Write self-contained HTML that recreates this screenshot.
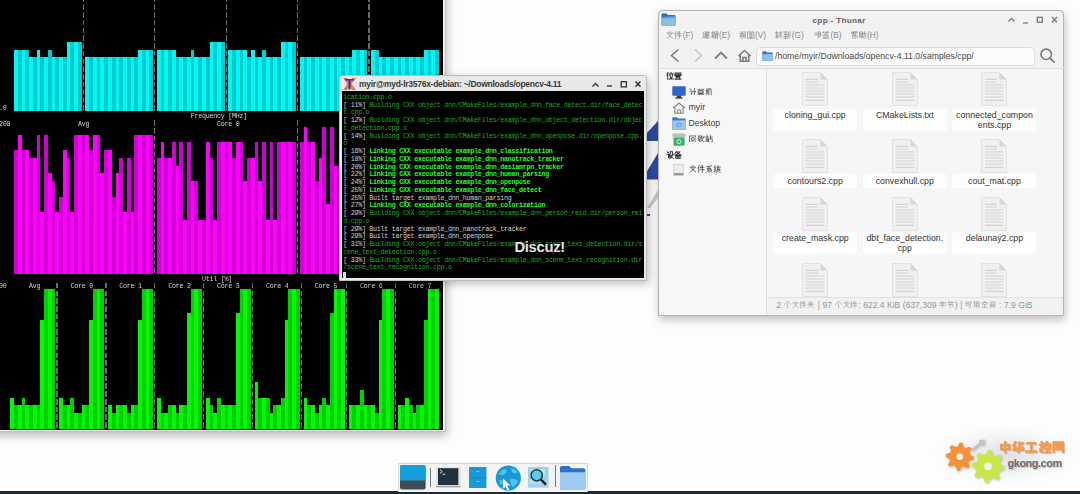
<!DOCTYPE html>
<html><head><meta charset="utf-8">
<style>
*{margin:0;padding:0;box-sizing:border-box}
html,body{width:1080px;height:494px;overflow:hidden;background:#fdfdfd;font-family:"Liberation Sans",sans-serif;position:relative}
.abs{position:absolute}
#stuiwin{position:absolute;left:-20px;top:-20px;width:465.8px;height:452.2px;background:#f0f0f0;box-shadow:1px 4px 9px rgba(0,0,0,0.26);border-right:1px solid #c0c0c0;border-bottom:1px solid #c0c0c0}
#stui{position:absolute;left:0;top:0;width:443px;height:430px;background:#000;overflow:hidden}
#stui i{position:absolute;display:block}
#stui b{position:absolute;display:block;width:1.3px;background:#6c6c6c}
#stui s{position:absolute;text-decoration:none;font-family:"Liberation Mono",monospace;font-size:6.6667px;letter-spacing:-0.24px;line-height:10px;color:#d6d6d6;transform:scaleY(1.1);transform-origin:0 50%;white-space:pre}
#wall1{position:absolute;left:646px;top:120px;width:14px;height:62px;background:#2a4fa8;clip-path:polygon(100% 0,100% 100%,0 100%,0 95%)}
#wall2{position:absolute;left:646px;top:186px;width:14px;height:34px;background:#c9ced8;clip-path:polygon(100% 0,100% 30%,20% 100%,0 100%)}
/* terminal */
#term{position:absolute;left:339px;top:74.5px;width:307.7px;height:206.5px;background:#e8e8e8;border:1px solid #bdbdbd;border-radius:3px 3px 0 0;box-shadow:2px 3px 8px rgba(0,0,0,0.25)}
#termtitle{position:absolute;left:19px;top:3.5px;font-weight:bold;font-size:8.5px;color:#383838;white-space:nowrap;letter-spacing:-0.265px}
#termbody{position:absolute;left:1.6px;top:15.8px;width:302.4px;height:187.1px;background:#000;overflow:hidden}
#termbody p{position:absolute;left:1.6px;font-family:"Liberation Mono",monospace;font-size:6.6667px;letter-spacing:-0.255px;line-height:8px;white-space:pre}
.w{color:#d0d0d0}.g{color:#1faa1f}.k{color:#22ff22;font-weight:bold}
#cursor{position:absolute;left:1.8px;top:180.8px;width:3px;height:6.2px;background:#e0e0e0}
#discuz{position:absolute;left:172.8px;top:147.4px;font-size:14.8px;font-weight:bold;color:#e4e4e4;text-shadow:0 0 2px #000,1px 1px 1px #000;letter-spacing:-0.3px}
/* thunar */
#thunar{position:absolute;left:658.5px;top:10px;width:406px;height:305.5px;background:#f6f6f5;border:1px solid #bcbcbc;border-radius:4px 4px 0 0;box-shadow:1px 3px 7px rgba(0,0,0,0.2);overflow:hidden}
.tt{position:absolute;white-space:nowrap}
</style></head><body>
<svg class="abs" style="left:640px;top:110px" width="20" height="120" viewBox="0 0 20 120"><polygon points="6,24 18,11 18,31 6,31" fill="#2a4ea6"/><polygon points="6,63 18,43 18,69.5 6,69.5" fill="#2a4ea6"/><polygon points="7,98 18,80 18,88 10,98" fill="#c8ccd4"/><rect x="7" y="104" width="3" height="2" fill="#33488a"/></svg>
<div id="stuiwin"></div>
<div id="stui"><i style="left:14px;top:49.59px;width:3.78px;height:61.9px;background:#00f8f4"></i><i style="left:17.76px;top:49.59px;width:3.78px;height:61.9px;background:#00ccd4"></i><i style="left:21.52px;top:49.59px;width:3.78px;height:61.9px;background:#00f8f4"></i><i style="left:25.28px;top:49.59px;width:3.78px;height:61.9px;background:#00ccd4"></i><i style="left:29.04px;top:57.32px;width:3.78px;height:54.16px;background:#00f8f4"></i><i style="left:32.8px;top:57.32px;width:3.78px;height:54.16px;background:#00ccd4"></i><i style="left:36.56px;top:49.59px;width:3.78px;height:61.9px;background:#00f8f4"></i><i style="left:40.32px;top:57.32px;width:3.78px;height:54.16px;background:#00ccd4"></i><i style="left:44.08px;top:57.32px;width:3.78px;height:54.16px;background:#00f8f4"></i><i style="left:47.84px;top:49.59px;width:3.78px;height:61.9px;background:#00ccd4"></i><i style="left:51.6px;top:57.32px;width:3.78px;height:54.16px;background:#00f8f4"></i><i style="left:55.36px;top:57.32px;width:3.78px;height:54.16px;background:#00ccd4"></i><i style="left:59.12px;top:57.32px;width:3.78px;height:54.16px;background:#00f8f4"></i><i style="left:62.88px;top:57.32px;width:3.78px;height:54.16px;background:#00ccd4"></i><i style="left:66.64px;top:41.85px;width:3.78px;height:69.63px;background:#00f8f4"></i><i style="left:70.4px;top:41.85px;width:3.78px;height:69.63px;background:#00ccd4"></i><i style="left:74.16px;top:41.85px;width:3.78px;height:69.63px;background:#00f8f4"></i><i style="left:77.92px;top:41.85px;width:3.78px;height:69.63px;background:#00ccd4"></i><b style="left:82.66px;top:-10px;height:4.49px"></b><b style="left:82.66px;top:-3.37px;height:5.6px"></b><b style="left:82.66px;top:4.36px;height:5.6px"></b><b style="left:82.66px;top:12.1px;height:5.6px"></b><b style="left:82.66px;top:19.84px;height:5.6px"></b><b style="left:82.66px;top:27.58px;height:5.6px"></b><b style="left:82.66px;top:35.31px;height:5.6px"></b><b style="left:82.66px;top:43.05px;height:5.6px"></b><b style="left:82.66px;top:50.79px;height:5.6px"></b><b style="left:82.66px;top:58.52px;height:5.6px"></b><b style="left:82.66px;top:66.26px;height:5.6px"></b><b style="left:82.66px;top:74px;height:5.6px"></b><b style="left:82.66px;top:81.73px;height:5.6px"></b><b style="left:82.66px;top:89.47px;height:5.6px"></b><b style="left:82.66px;top:97.21px;height:5.6px"></b><b style="left:82.66px;top:104.95px;height:5.6px"></b><i style="left:85.44px;top:57.32px;width:3.78px;height:54.16px;background:#00f8f4"></i><i style="left:89.2px;top:57.32px;width:3.78px;height:54.16px;background:#00ccd4"></i><i style="left:92.96px;top:57.32px;width:3.78px;height:54.16px;background:#00f8f4"></i><i style="left:96.72px;top:57.32px;width:3.78px;height:54.16px;background:#00ccd4"></i><i style="left:100.48px;top:57.32px;width:3.78px;height:54.16px;background:#00f8f4"></i><i style="left:104.24px;top:57.32px;width:3.78px;height:54.16px;background:#00ccd4"></i><i style="left:108px;top:57.32px;width:3.78px;height:54.16px;background:#00f8f4"></i><i style="left:111.76px;top:57.32px;width:3.78px;height:54.16px;background:#00ccd4"></i><i style="left:115.52px;top:57.32px;width:3.78px;height:54.16px;background:#00f8f4"></i><i style="left:119.28px;top:57.32px;width:3.78px;height:54.16px;background:#00ccd4"></i><i style="left:123.04px;top:57.32px;width:3.78px;height:54.16px;background:#00f8f4"></i><i style="left:126.8px;top:57.32px;width:3.78px;height:54.16px;background:#00ccd4"></i><i style="left:130.56px;top:57.32px;width:3.78px;height:54.16px;background:#00f8f4"></i><i style="left:134.32px;top:57.32px;width:3.78px;height:54.16px;background:#00ccd4"></i><i style="left:138.08px;top:49.59px;width:3.78px;height:61.9px;background:#00f8f4"></i><i style="left:141.84px;top:49.59px;width:3.78px;height:61.9px;background:#00ccd4"></i><i style="left:145.6px;top:49.59px;width:3.78px;height:61.9px;background:#00f8f4"></i><i style="left:149.36px;top:49.59px;width:3.78px;height:61.9px;background:#00ccd4"></i><b style="left:154.1px;top:-10px;height:4.49px"></b><b style="left:154.1px;top:-3.37px;height:5.6px"></b><b style="left:154.1px;top:4.36px;height:5.6px"></b><b style="left:154.1px;top:12.1px;height:5.6px"></b><b style="left:154.1px;top:19.84px;height:5.6px"></b><b style="left:154.1px;top:27.58px;height:5.6px"></b><b style="left:154.1px;top:35.31px;height:5.6px"></b><b style="left:154.1px;top:43.05px;height:5.6px"></b><b style="left:154.1px;top:50.79px;height:5.6px"></b><b style="left:154.1px;top:58.52px;height:5.6px"></b><b style="left:154.1px;top:66.26px;height:5.6px"></b><b style="left:154.1px;top:74px;height:5.6px"></b><b style="left:154.1px;top:81.73px;height:5.6px"></b><b style="left:154.1px;top:89.47px;height:5.6px"></b><b style="left:154.1px;top:97.21px;height:5.6px"></b><b style="left:154.1px;top:104.95px;height:5.6px"></b><i style="left:156.88px;top:49.59px;width:3.78px;height:61.9px;background:#00f8f4"></i><i style="left:160.64px;top:49.59px;width:3.78px;height:61.9px;background:#00ccd4"></i><i style="left:164.4px;top:49.59px;width:3.78px;height:61.9px;background:#00f8f4"></i><i style="left:168.16px;top:49.59px;width:3.78px;height:61.9px;background:#00ccd4"></i><i style="left:171.92px;top:49.59px;width:3.78px;height:61.9px;background:#00f8f4"></i><i style="left:175.68px;top:57.32px;width:3.78px;height:54.16px;background:#00ccd4"></i><i style="left:179.44px;top:57.32px;width:3.78px;height:54.16px;background:#00f8f4"></i><i style="left:183.2px;top:57.32px;width:3.78px;height:54.16px;background:#00ccd4"></i><i style="left:186.96px;top:57.32px;width:3.78px;height:54.16px;background:#00f8f4"></i><i style="left:190.72px;top:49.59px;width:3.78px;height:61.9px;background:#00ccd4"></i><i style="left:194.48px;top:57.32px;width:3.78px;height:54.16px;background:#00f8f4"></i><i style="left:198.24px;top:57.32px;width:3.78px;height:54.16px;background:#00ccd4"></i><i style="left:202px;top:57.32px;width:3.78px;height:54.16px;background:#00f8f4"></i><i style="left:205.76px;top:57.32px;width:3.78px;height:54.16px;background:#00ccd4"></i><i style="left:209.52px;top:41.85px;width:3.78px;height:69.63px;background:#00f8f4"></i><i style="left:213.28px;top:41.85px;width:3.78px;height:69.63px;background:#00ccd4"></i><i style="left:217.04px;top:41.85px;width:3.78px;height:69.63px;background:#00f8f4"></i><i style="left:220.8px;top:41.85px;width:3.78px;height:69.63px;background:#00ccd4"></i><b style="left:225.54px;top:-10px;height:4.49px"></b><b style="left:225.54px;top:-3.37px;height:5.6px"></b><b style="left:225.54px;top:4.36px;height:5.6px"></b><b style="left:225.54px;top:12.1px;height:5.6px"></b><b style="left:225.54px;top:19.84px;height:5.6px"></b><b style="left:225.54px;top:27.58px;height:5.6px"></b><b style="left:225.54px;top:35.31px;height:5.6px"></b><b style="left:225.54px;top:43.05px;height:5.6px"></b><b style="left:225.54px;top:50.79px;height:5.6px"></b><b style="left:225.54px;top:58.52px;height:5.6px"></b><b style="left:225.54px;top:66.26px;height:5.6px"></b><b style="left:225.54px;top:74px;height:5.6px"></b><b style="left:225.54px;top:81.73px;height:5.6px"></b><b style="left:225.54px;top:89.47px;height:5.6px"></b><b style="left:225.54px;top:97.21px;height:5.6px"></b><b style="left:225.54px;top:104.95px;height:5.6px"></b><i style="left:228.32px;top:49.59px;width:3.78px;height:61.9px;background:#00f8f4"></i><i style="left:232.08px;top:49.59px;width:3.78px;height:61.9px;background:#00ccd4"></i><i style="left:235.84px;top:49.59px;width:3.78px;height:61.9px;background:#00f8f4"></i><i style="left:239.6px;top:49.59px;width:3.78px;height:61.9px;background:#00ccd4"></i><i style="left:243.36px;top:49.59px;width:3.78px;height:61.9px;background:#00f8f4"></i><i style="left:247.12px;top:57.32px;width:3.78px;height:54.16px;background:#00ccd4"></i><i style="left:250.88px;top:49.59px;width:3.78px;height:61.9px;background:#00f8f4"></i><i style="left:254.64px;top:57.32px;width:3.78px;height:54.16px;background:#00ccd4"></i><i style="left:258.4px;top:57.32px;width:3.78px;height:54.16px;background:#00f8f4"></i><i style="left:262.16px;top:49.59px;width:3.78px;height:61.9px;background:#00ccd4"></i><i style="left:265.92px;top:57.32px;width:3.78px;height:54.16px;background:#00f8f4"></i><i style="left:269.68px;top:57.32px;width:3.78px;height:54.16px;background:#00ccd4"></i><i style="left:273.44px;top:57.32px;width:3.78px;height:54.16px;background:#00f8f4"></i><i style="left:277.2px;top:57.32px;width:3.78px;height:54.16px;background:#00ccd4"></i><i style="left:280.96px;top:41.85px;width:3.78px;height:69.63px;background:#00f8f4"></i><i style="left:284.72px;top:41.85px;width:3.78px;height:69.63px;background:#00ccd4"></i><i style="left:288.48px;top:41.85px;width:3.78px;height:69.63px;background:#00f8f4"></i><i style="left:292.24px;top:41.85px;width:3.78px;height:69.63px;background:#00ccd4"></i><b style="left:296.98px;top:-10px;height:4.49px"></b><b style="left:296.98px;top:-3.37px;height:5.6px"></b><b style="left:296.98px;top:4.36px;height:5.6px"></b><b style="left:296.98px;top:12.1px;height:5.6px"></b><b style="left:296.98px;top:19.84px;height:5.6px"></b><b style="left:296.98px;top:27.58px;height:5.6px"></b><b style="left:296.98px;top:35.31px;height:5.6px"></b><b style="left:296.98px;top:43.05px;height:5.6px"></b><b style="left:296.98px;top:50.79px;height:5.6px"></b><b style="left:296.98px;top:58.52px;height:5.6px"></b><b style="left:296.98px;top:66.26px;height:5.6px"></b><b style="left:296.98px;top:74px;height:5.6px"></b><b style="left:296.98px;top:81.73px;height:5.6px"></b><b style="left:296.98px;top:89.47px;height:5.6px"></b><b style="left:296.98px;top:97.21px;height:5.6px"></b><b style="left:296.98px;top:104.95px;height:5.6px"></b><i style="left:299.76px;top:57.32px;width:3.78px;height:54.16px;background:#00f8f4"></i><i style="left:303.52px;top:57.32px;width:3.78px;height:54.16px;background:#00ccd4"></i><i style="left:307.28px;top:57.32px;width:3.78px;height:54.16px;background:#00f8f4"></i><i style="left:311.04px;top:57.32px;width:3.78px;height:54.16px;background:#00ccd4"></i><i style="left:314.8px;top:57.32px;width:3.78px;height:54.16px;background:#00f8f4"></i><i style="left:318.56px;top:57.32px;width:3.78px;height:54.16px;background:#00ccd4"></i><i style="left:322.32px;top:57.32px;width:3.78px;height:54.16px;background:#00f8f4"></i><i style="left:326.08px;top:57.32px;width:3.78px;height:54.16px;background:#00ccd4"></i><i style="left:329.84px;top:57.32px;width:3.78px;height:54.16px;background:#00f8f4"></i><i style="left:333.6px;top:57.32px;width:3.78px;height:54.16px;background:#00ccd4"></i><i style="left:337.36px;top:57.32px;width:3.78px;height:54.16px;background:#00f8f4"></i><i style="left:341.12px;top:57.32px;width:3.78px;height:54.16px;background:#00ccd4"></i><i style="left:344.88px;top:57.32px;width:3.78px;height:54.16px;background:#00f8f4"></i><i style="left:348.64px;top:57.32px;width:3.78px;height:54.16px;background:#00ccd4"></i><i style="left:352.4px;top:49.59px;width:3.78px;height:61.9px;background:#00f8f4"></i><i style="left:356.16px;top:49.59px;width:3.78px;height:61.9px;background:#00ccd4"></i><i style="left:359.92px;top:49.59px;width:3.78px;height:61.9px;background:#00f8f4"></i><i style="left:363.68px;top:49.59px;width:3.78px;height:61.9px;background:#00ccd4"></i><b style="left:368.42px;top:-10px;height:4.49px"></b><b style="left:368.42px;top:-3.37px;height:5.6px"></b><b style="left:368.42px;top:4.36px;height:5.6px"></b><b style="left:368.42px;top:12.1px;height:5.6px"></b><b style="left:368.42px;top:19.84px;height:5.6px"></b><b style="left:368.42px;top:27.58px;height:5.6px"></b><b style="left:368.42px;top:35.31px;height:5.6px"></b><b style="left:368.42px;top:43.05px;height:5.6px"></b><b style="left:368.42px;top:50.79px;height:5.6px"></b><b style="left:368.42px;top:58.52px;height:5.6px"></b><b style="left:368.42px;top:66.26px;height:5.6px"></b><b style="left:368.42px;top:74px;height:5.6px"></b><b style="left:368.42px;top:81.73px;height:5.6px"></b><b style="left:368.42px;top:89.47px;height:5.6px"></b><b style="left:368.42px;top:97.21px;height:5.6px"></b><b style="left:368.42px;top:104.95px;height:5.6px"></b><i style="left:371.2px;top:49.59px;width:3.78px;height:61.9px;background:#00f8f4"></i><i style="left:374.96px;top:49.59px;width:3.78px;height:61.9px;background:#00ccd4"></i><i style="left:378.72px;top:57.32px;width:3.78px;height:54.16px;background:#00f8f4"></i><i style="left:382.48px;top:57.32px;width:3.78px;height:54.16px;background:#00ccd4"></i><i style="left:386.24px;top:57.32px;width:3.78px;height:54.16px;background:#00f8f4"></i><i style="left:390px;top:57.32px;width:3.78px;height:54.16px;background:#00ccd4"></i><i style="left:393.76px;top:57.32px;width:3.78px;height:54.16px;background:#00f8f4"></i><i style="left:397.52px;top:57.32px;width:3.78px;height:54.16px;background:#00ccd4"></i><i style="left:401.28px;top:57.32px;width:3.78px;height:54.16px;background:#00f8f4"></i><i style="left:405.04px;top:57.32px;width:3.78px;height:54.16px;background:#00ccd4"></i><i style="left:408.8px;top:57.32px;width:3.78px;height:54.16px;background:#00f8f4"></i><i style="left:412.56px;top:57.32px;width:3.78px;height:54.16px;background:#00ccd4"></i><i style="left:416.32px;top:57.32px;width:3.78px;height:54.16px;background:#00f8f4"></i><i style="left:420.08px;top:57.32px;width:3.78px;height:54.16px;background:#00ccd4"></i><i style="left:423.84px;top:49.59px;width:3.78px;height:61.9px;background:#00f8f4"></i><i style="left:427.6px;top:49.59px;width:3.78px;height:61.9px;background:#00ccd4"></i><i style="left:431.36px;top:49.59px;width:3.78px;height:61.9px;background:#00f8f4"></i><i style="left:435.12px;top:49.59px;width:3.78px;height:61.9px;background:#00ccd4"></i><i style="left:14px;top:150.17px;width:3.78px;height:123.79px;background:#d000d4"></i><i style="left:17.76px;top:134.69px;width:3.78px;height:139.27px;background:#ff00ff"></i><i style="left:21.52px;top:150.17px;width:3.78px;height:123.79px;background:#d000d4"></i><i style="left:25.28px;top:150.17px;width:3.78px;height:123.79px;background:#ff00ff"></i><i style="left:29.04px;top:157.9px;width:3.78px;height:116.06px;background:#d000d4"></i><i style="left:32.8px;top:157.9px;width:3.78px;height:116.06px;background:#ff00ff"></i><i style="left:36.56px;top:134.69px;width:3.78px;height:139.27px;background:#d000d4"></i><i style="left:40.32px;top:212.06px;width:3.78px;height:61.9px;background:#ff00ff"></i><i style="left:44.08px;top:134.69px;width:3.78px;height:139.27px;background:#d000d4"></i><i style="left:47.84px;top:173.38px;width:3.78px;height:100.58px;background:#ff00ff"></i><i style="left:51.6px;top:181.12px;width:3.78px;height:92.84px;background:#d000d4"></i><i style="left:55.36px;top:212.06px;width:3.78px;height:61.9px;background:#ff00ff"></i><i style="left:59.12px;top:196.59px;width:3.78px;height:77.37px;background:#d000d4"></i><i style="left:62.88px;top:150.17px;width:3.78px;height:123.79px;background:#ff00ff"></i><i style="left:66.64px;top:157.9px;width:3.78px;height:116.06px;background:#d000d4"></i><i style="left:70.4px;top:212.06px;width:3.78px;height:61.9px;background:#ff00ff"></i><i style="left:74.16px;top:134.69px;width:3.78px;height:139.27px;background:#d000d4"></i><i style="left:77.92px;top:134.69px;width:3.78px;height:139.27px;background:#ff00ff"></i><i style="left:81.68px;top:134.69px;width:3.78px;height:139.27px;background:#d000d4"></i><i style="left:85.44px;top:134.69px;width:3.78px;height:139.27px;background:#ff00ff"></i><i style="left:89.2px;top:150.17px;width:3.78px;height:123.79px;background:#d000d4"></i><i style="left:92.96px;top:134.69px;width:3.78px;height:139.27px;background:#ff00ff"></i><i style="left:96.72px;top:134.69px;width:3.78px;height:139.27px;background:#d000d4"></i><i style="left:100.48px;top:173.38px;width:3.78px;height:100.58px;background:#ff00ff"></i><i style="left:104.24px;top:150.17px;width:3.78px;height:123.79px;background:#d000d4"></i><i style="left:108px;top:150.17px;width:3.78px;height:123.79px;background:#ff00ff"></i><i style="left:111.76px;top:196.59px;width:3.78px;height:77.37px;background:#d000d4"></i><i style="left:115.52px;top:173.38px;width:3.78px;height:100.58px;background:#ff00ff"></i><i style="left:119.28px;top:157.9px;width:3.78px;height:116.06px;background:#d000d4"></i><i style="left:123.04px;top:212.06px;width:3.78px;height:61.9px;background:#ff00ff"></i><i style="left:126.8px;top:157.9px;width:3.78px;height:116.06px;background:#d000d4"></i><i style="left:130.56px;top:212.06px;width:3.78px;height:61.9px;background:#ff00ff"></i><i style="left:134.32px;top:134.69px;width:3.78px;height:139.27px;background:#d000d4"></i><i style="left:138.08px;top:134.69px;width:3.78px;height:139.27px;background:#ff00ff"></i><i style="left:141.84px;top:134.69px;width:3.78px;height:139.27px;background:#d000d4"></i><i style="left:145.6px;top:134.69px;width:3.78px;height:139.27px;background:#ff00ff"></i><i style="left:149.36px;top:134.69px;width:3.78px;height:139.27px;background:#d000d4"></i><b style="left:154.1px;top:120.42px;height:5.6px"></b><b style="left:154.1px;top:128.16px;height:5.6px"></b><b style="left:154.1px;top:135.89px;height:5.6px"></b><b style="left:154.1px;top:143.63px;height:5.6px"></b><b style="left:154.1px;top:151.37px;height:5.6px"></b><b style="left:154.1px;top:159.1px;height:5.6px"></b><b style="left:154.1px;top:166.84px;height:5.6px"></b><b style="left:154.1px;top:174.58px;height:5.6px"></b><b style="left:154.1px;top:182.32px;height:5.6px"></b><b style="left:154.1px;top:190.05px;height:5.6px"></b><b style="left:154.1px;top:197.79px;height:5.6px"></b><b style="left:154.1px;top:205.53px;height:5.6px"></b><b style="left:154.1px;top:213.26px;height:5.6px"></b><b style="left:154.1px;top:221px;height:5.6px"></b><b style="left:154.1px;top:228.74px;height:5.6px"></b><b style="left:154.1px;top:236.47px;height:5.6px"></b><b style="left:154.1px;top:244.21px;height:5.6px"></b><b style="left:154.1px;top:251.95px;height:5.6px"></b><b style="left:154.1px;top:259.69px;height:5.6px"></b><b style="left:154.1px;top:267.42px;height:5.6px"></b><i style="left:156.88px;top:157.9px;width:3.78px;height:116.06px;background:#d000d4"></i><i style="left:160.64px;top:142.43px;width:3.78px;height:131.53px;background:#ff00ff"></i><i style="left:164.4px;top:157.9px;width:3.78px;height:116.06px;background:#d000d4"></i><i style="left:168.16px;top:157.9px;width:3.78px;height:116.06px;background:#ff00ff"></i><i style="left:171.92px;top:142.43px;width:3.78px;height:131.53px;background:#d000d4"></i><i style="left:175.68px;top:165.64px;width:3.78px;height:108.32px;background:#ff00ff"></i><i style="left:179.44px;top:142.43px;width:3.78px;height:131.53px;background:#d000d4"></i><i style="left:183.2px;top:219.8px;width:3.78px;height:54.16px;background:#ff00ff"></i><i style="left:186.96px;top:142.43px;width:3.78px;height:131.53px;background:#d000d4"></i><i style="left:190.72px;top:181.12px;width:3.78px;height:92.84px;background:#ff00ff"></i><i style="left:194.48px;top:181.12px;width:3.78px;height:92.84px;background:#d000d4"></i><i style="left:198.24px;top:219.8px;width:3.78px;height:54.16px;background:#ff00ff"></i><i style="left:202px;top:219.8px;width:3.78px;height:54.16px;background:#d000d4"></i><i style="left:205.76px;top:142.43px;width:3.78px;height:131.53px;background:#ff00ff"></i><i style="left:209.52px;top:157.9px;width:3.78px;height:116.06px;background:#d000d4"></i><i style="left:213.28px;top:219.8px;width:3.78px;height:54.16px;background:#ff00ff"></i><i style="left:217.04px;top:142.43px;width:3.78px;height:131.53px;background:#d000d4"></i><i style="left:220.8px;top:142.43px;width:3.78px;height:131.53px;background:#ff00ff"></i><i style="left:224.56px;top:142.43px;width:3.78px;height:131.53px;background:#d000d4"></i><i style="left:228.32px;top:142.43px;width:3.78px;height:131.53px;background:#ff00ff"></i><i style="left:232.08px;top:157.9px;width:3.78px;height:116.06px;background:#d000d4"></i><i style="left:235.84px;top:142.43px;width:3.78px;height:131.53px;background:#ff00ff"></i><i style="left:239.6px;top:142.43px;width:3.78px;height:131.53px;background:#d000d4"></i><i style="left:243.36px;top:181.12px;width:3.78px;height:92.84px;background:#ff00ff"></i><i style="left:247.12px;top:157.9px;width:3.78px;height:116.06px;background:#d000d4"></i><i style="left:250.88px;top:157.9px;width:3.78px;height:116.06px;background:#ff00ff"></i><i style="left:254.64px;top:142.43px;width:3.78px;height:131.53px;background:#d000d4"></i><i style="left:258.4px;top:181.12px;width:3.78px;height:92.84px;background:#ff00ff"></i><i style="left:262.16px;top:142.43px;width:3.78px;height:131.53px;background:#d000d4"></i><i style="left:265.92px;top:219.8px;width:3.78px;height:54.16px;background:#ff00ff"></i><i style="left:269.68px;top:142.43px;width:3.78px;height:131.53px;background:#d000d4"></i><i style="left:273.44px;top:219.8px;width:3.78px;height:54.16px;background:#ff00ff"></i><i style="left:277.2px;top:142.43px;width:3.78px;height:131.53px;background:#d000d4"></i><i style="left:280.96px;top:142.43px;width:3.78px;height:131.53px;background:#ff00ff"></i><i style="left:284.72px;top:142.43px;width:3.78px;height:131.53px;background:#d000d4"></i><i style="left:288.48px;top:142.43px;width:3.78px;height:131.53px;background:#ff00ff"></i><i style="left:292.24px;top:142.43px;width:3.78px;height:131.53px;background:#d000d4"></i><b style="left:296.98px;top:120.42px;height:5.6px"></b><b style="left:296.98px;top:128.16px;height:5.6px"></b><b style="left:296.98px;top:135.89px;height:5.6px"></b><b style="left:296.98px;top:143.63px;height:5.6px"></b><b style="left:296.98px;top:151.37px;height:5.6px"></b><b style="left:296.98px;top:159.1px;height:5.6px"></b><b style="left:296.98px;top:166.84px;height:5.6px"></b><b style="left:296.98px;top:174.58px;height:5.6px"></b><b style="left:296.98px;top:182.32px;height:5.6px"></b><b style="left:296.98px;top:190.05px;height:5.6px"></b><b style="left:296.98px;top:197.79px;height:5.6px"></b><b style="left:296.98px;top:205.53px;height:5.6px"></b><b style="left:296.98px;top:213.26px;height:5.6px"></b><b style="left:296.98px;top:221px;height:5.6px"></b><b style="left:296.98px;top:228.74px;height:5.6px"></b><b style="left:296.98px;top:236.47px;height:5.6px"></b><b style="left:296.98px;top:244.21px;height:5.6px"></b><b style="left:296.98px;top:251.95px;height:5.6px"></b><b style="left:296.98px;top:259.69px;height:5.6px"></b><b style="left:296.98px;top:267.42px;height:5.6px"></b><i style="left:299.76px;top:142.43px;width:3.78px;height:131.53px;background:#d000d4"></i><i style="left:303.52px;top:126.96px;width:3.78px;height:147px;background:#ff00ff"></i><i style="left:307.28px;top:142.43px;width:3.78px;height:131.53px;background:#d000d4"></i><i style="left:311.04px;top:142.43px;width:3.78px;height:131.53px;background:#ff00ff"></i><i style="left:314.8px;top:181.12px;width:3.78px;height:92.84px;background:#d000d4"></i><i style="left:318.56px;top:157.9px;width:3.78px;height:116.06px;background:#ff00ff"></i><i style="left:322.32px;top:126.96px;width:3.78px;height:147px;background:#d000d4"></i><i style="left:326.08px;top:204.33px;width:3.78px;height:69.63px;background:#ff00ff"></i><i style="left:329.84px;top:126.96px;width:3.78px;height:147px;background:#d000d4"></i><i style="left:333.6px;top:165.64px;width:3.78px;height:108.32px;background:#ff00ff"></i><i style="left:337.36px;top:165.64px;width:3.78px;height:108.32px;background:#d000d4"></i><i style="left:341.12px;top:142.43px;width:3.78px;height:131.53px;background:#ff00ff"></i><i style="left:344.88px;top:142.43px;width:3.78px;height:131.53px;background:#d000d4"></i><i style="left:348.64px;top:142.43px;width:3.78px;height:131.53px;background:#ff00ff"></i><i style="left:352.4px;top:142.43px;width:3.78px;height:131.53px;background:#d000d4"></i><i style="left:356.16px;top:142.43px;width:3.78px;height:131.53px;background:#ff00ff"></i><i style="left:359.92px;top:142.43px;width:3.78px;height:131.53px;background:#d000d4"></i><i style="left:363.68px;top:142.43px;width:3.78px;height:131.53px;background:#ff00ff"></i><i style="left:367.44px;top:142.43px;width:3.78px;height:131.53px;background:#d000d4"></i><i style="left:371.2px;top:142.43px;width:3.78px;height:131.53px;background:#ff00ff"></i><i style="left:374.96px;top:142.43px;width:3.78px;height:131.53px;background:#d000d4"></i><i style="left:378.72px;top:142.43px;width:3.78px;height:131.53px;background:#ff00ff"></i><i style="left:382.48px;top:142.43px;width:3.78px;height:131.53px;background:#d000d4"></i><i style="left:386.24px;top:142.43px;width:3.78px;height:131.53px;background:#ff00ff"></i><i style="left:390px;top:142.43px;width:3.78px;height:131.53px;background:#d000d4"></i><i style="left:393.76px;top:142.43px;width:3.78px;height:131.53px;background:#ff00ff"></i><i style="left:397.52px;top:142.43px;width:3.78px;height:131.53px;background:#d000d4"></i><i style="left:401.28px;top:142.43px;width:3.78px;height:131.53px;background:#ff00ff"></i><i style="left:405.04px;top:142.43px;width:3.78px;height:131.53px;background:#d000d4"></i><i style="left:408.8px;top:142.43px;width:3.78px;height:131.53px;background:#ff00ff"></i><i style="left:412.56px;top:142.43px;width:3.78px;height:131.53px;background:#d000d4"></i><i style="left:416.32px;top:142.43px;width:3.78px;height:131.53px;background:#ff00ff"></i><i style="left:420.08px;top:142.43px;width:3.78px;height:131.53px;background:#d000d4"></i><i style="left:423.84px;top:142.43px;width:3.78px;height:131.53px;background:#ff00ff"></i><i style="left:427.6px;top:142.43px;width:3.78px;height:131.53px;background:#d000d4"></i><i style="left:431.36px;top:142.43px;width:3.78px;height:131.53px;background:#ff00ff"></i><i style="left:435.12px;top:142.43px;width:3.78px;height:131.53px;background:#d000d4"></i><i style="left:10.24px;top:397.75px;width:3.78px;height:30.95px;background:#00f800"></i><i style="left:14px;top:405.49px;width:3.78px;height:23.21px;background:#00d000"></i><i style="left:17.76px;top:405.49px;width:3.78px;height:23.21px;background:#00f800"></i><i style="left:21.52px;top:397.75px;width:3.78px;height:30.95px;background:#00d000"></i><i style="left:25.28px;top:405.49px;width:3.78px;height:23.21px;background:#00f800"></i><i style="left:29.04px;top:405.49px;width:3.78px;height:23.21px;background:#00d000"></i><i style="left:32.8px;top:405.49px;width:3.78px;height:23.21px;background:#00f800"></i><i style="left:36.56px;top:405.49px;width:3.78px;height:23.21px;background:#00d000"></i><i style="left:40.32px;top:320.38px;width:3.78px;height:108.32px;background:#00f800"></i><i style="left:44.08px;top:289.43px;width:3.78px;height:139.27px;background:#00d000"></i><i style="left:47.84px;top:289.43px;width:3.78px;height:139.27px;background:#00f800"></i><i style="left:51.6px;top:289.43px;width:3.78px;height:139.27px;background:#00d000"></i><i style="left:59.12px;top:397.75px;width:3.78px;height:30.95px;background:#00f800"></i><i style="left:62.88px;top:405.49px;width:3.78px;height:23.21px;background:#00d000"></i><i style="left:66.64px;top:405.49px;width:3.78px;height:23.21px;background:#00f800"></i><i style="left:70.4px;top:397.75px;width:3.78px;height:30.95px;background:#00d000"></i><i style="left:74.16px;top:413.23px;width:3.78px;height:15.47px;background:#00f800"></i><i style="left:77.92px;top:413.23px;width:3.78px;height:15.47px;background:#00d000"></i><i style="left:81.68px;top:405.49px;width:3.78px;height:23.21px;background:#00f800"></i><i style="left:85.44px;top:405.49px;width:3.78px;height:23.21px;background:#00d000"></i><i style="left:89.2px;top:320.38px;width:3.78px;height:108.32px;background:#00f800"></i><i style="left:92.96px;top:289.43px;width:3.78px;height:139.27px;background:#00d000"></i><i style="left:96.72px;top:289.43px;width:3.78px;height:139.27px;background:#00f800"></i><i style="left:100.48px;top:289.43px;width:3.78px;height:139.27px;background:#00d000"></i><i style="left:108px;top:405.49px;width:3.78px;height:23.21px;background:#00f800"></i><i style="left:111.76px;top:413.23px;width:3.78px;height:15.47px;background:#00d000"></i><i style="left:115.52px;top:405.49px;width:3.78px;height:23.21px;background:#00f800"></i><i style="left:119.28px;top:405.49px;width:3.78px;height:23.21px;background:#00d000"></i><i style="left:123.04px;top:405.49px;width:3.78px;height:23.21px;background:#00f800"></i><i style="left:126.8px;top:413.23px;width:3.78px;height:15.47px;background:#00d000"></i><i style="left:130.56px;top:405.49px;width:3.78px;height:23.21px;background:#00f800"></i><i style="left:134.32px;top:405.49px;width:3.78px;height:23.21px;background:#00d000"></i><i style="left:138.08px;top:320.38px;width:3.78px;height:108.32px;background:#00f800"></i><i style="left:141.84px;top:289.43px;width:3.78px;height:139.27px;background:#00d000"></i><i style="left:145.6px;top:289.43px;width:3.78px;height:139.27px;background:#00f800"></i><i style="left:149.36px;top:289.43px;width:3.78px;height:139.27px;background:#00d000"></i><i style="left:156.88px;top:397.75px;width:3.78px;height:30.95px;background:#00f800"></i><i style="left:160.64px;top:413.23px;width:3.78px;height:15.47px;background:#00d000"></i><i style="left:164.4px;top:413.23px;width:3.78px;height:15.47px;background:#00f800"></i><i style="left:168.16px;top:405.49px;width:3.78px;height:23.21px;background:#00d000"></i><i style="left:171.92px;top:405.49px;width:3.78px;height:23.21px;background:#00f800"></i><i style="left:175.68px;top:413.23px;width:3.78px;height:15.47px;background:#00d000"></i><i style="left:179.44px;top:405.49px;width:3.78px;height:23.21px;background:#00f800"></i><i style="left:183.2px;top:405.49px;width:3.78px;height:23.21px;background:#00d000"></i><i style="left:186.96px;top:312.64px;width:3.78px;height:116.06px;background:#00f800"></i><i style="left:190.72px;top:289.43px;width:3.78px;height:139.27px;background:#00d000"></i><i style="left:194.48px;top:289.43px;width:3.78px;height:139.27px;background:#00f800"></i><i style="left:198.24px;top:289.43px;width:3.78px;height:139.27px;background:#00d000"></i><i style="left:205.76px;top:397.75px;width:3.78px;height:30.95px;background:#00f800"></i><i style="left:209.52px;top:405.49px;width:3.78px;height:23.21px;background:#00d000"></i><i style="left:213.28px;top:413.23px;width:3.78px;height:15.47px;background:#00f800"></i><i style="left:217.04px;top:397.75px;width:3.78px;height:30.95px;background:#00d000"></i><i style="left:220.8px;top:405.49px;width:3.78px;height:23.21px;background:#00f800"></i><i style="left:224.56px;top:405.49px;width:3.78px;height:23.21px;background:#00d000"></i><i style="left:228.32px;top:405.49px;width:3.78px;height:23.21px;background:#00f800"></i><i style="left:232.08px;top:405.49px;width:3.78px;height:23.21px;background:#00d000"></i><i style="left:235.84px;top:312.64px;width:3.78px;height:116.06px;background:#00f800"></i><i style="left:239.6px;top:289.43px;width:3.78px;height:139.27px;background:#00d000"></i><i style="left:243.36px;top:289.43px;width:3.78px;height:139.27px;background:#00f800"></i><i style="left:247.12px;top:289.43px;width:3.78px;height:139.27px;background:#00d000"></i><i style="left:254.64px;top:382.28px;width:3.78px;height:46.42px;background:#00f800"></i><i style="left:258.4px;top:397.75px;width:3.78px;height:30.95px;background:#00d000"></i><i style="left:262.16px;top:397.75px;width:3.78px;height:30.95px;background:#00f800"></i><i style="left:265.92px;top:397.75px;width:3.78px;height:30.95px;background:#00d000"></i><i style="left:269.68px;top:413.23px;width:3.78px;height:15.47px;background:#00f800"></i><i style="left:273.44px;top:405.49px;width:3.78px;height:23.21px;background:#00d000"></i><i style="left:277.2px;top:405.49px;width:3.78px;height:23.21px;background:#00f800"></i><i style="left:280.96px;top:397.75px;width:3.78px;height:30.95px;background:#00d000"></i><i style="left:284.72px;top:320.38px;width:3.78px;height:108.32px;background:#00f800"></i><i style="left:288.48px;top:289.43px;width:3.78px;height:139.27px;background:#00d000"></i><i style="left:292.24px;top:289.43px;width:3.78px;height:139.27px;background:#00f800"></i><i style="left:296px;top:289.43px;width:3.78px;height:139.27px;background:#00d000"></i><i style="left:303.52px;top:397.75px;width:3.78px;height:30.95px;background:#00f800"></i><i style="left:307.28px;top:405.49px;width:3.78px;height:23.21px;background:#00d000"></i><i style="left:311.04px;top:405.49px;width:3.78px;height:23.21px;background:#00f800"></i><i style="left:314.8px;top:413.23px;width:3.78px;height:15.47px;background:#00d000"></i><i style="left:318.56px;top:405.49px;width:3.78px;height:23.21px;background:#00f800"></i><i style="left:322.32px;top:397.75px;width:3.78px;height:30.95px;background:#00d000"></i><i style="left:326.08px;top:405.49px;width:3.78px;height:23.21px;background:#00f800"></i><i style="left:329.84px;top:312.64px;width:3.78px;height:116.06px;background:#00d000"></i><i style="left:333.6px;top:289.43px;width:3.78px;height:139.27px;background:#00f800"></i><i style="left:337.36px;top:289.43px;width:3.78px;height:139.27px;background:#00d000"></i><i style="left:341.12px;top:289.43px;width:3.78px;height:139.27px;background:#00f800"></i><i style="left:348.64px;top:405.49px;width:3.78px;height:23.21px;background:#00f800"></i><i style="left:352.4px;top:405.49px;width:3.78px;height:23.21px;background:#00d000"></i><i style="left:356.16px;top:405.49px;width:3.78px;height:23.21px;background:#00f800"></i><i style="left:359.92px;top:390.01px;width:3.78px;height:38.69px;background:#00d000"></i><i style="left:363.68px;top:405.49px;width:3.78px;height:23.21px;background:#00f800"></i><i style="left:367.44px;top:405.49px;width:3.78px;height:23.21px;background:#00d000"></i><i style="left:371.2px;top:405.49px;width:3.78px;height:23.21px;background:#00f800"></i><i style="left:374.96px;top:413.23px;width:3.78px;height:15.47px;background:#00d000"></i><i style="left:378.72px;top:320.38px;width:3.78px;height:108.32px;background:#00f800"></i><i style="left:382.48px;top:289.43px;width:3.78px;height:139.27px;background:#00d000"></i><i style="left:386.24px;top:289.43px;width:3.78px;height:139.27px;background:#00f800"></i><i style="left:390px;top:289.43px;width:3.78px;height:139.27px;background:#00d000"></i><i style="left:397.52px;top:405.49px;width:3.78px;height:23.21px;background:#00f800"></i><i style="left:401.28px;top:405.49px;width:3.78px;height:23.21px;background:#00d000"></i><i style="left:405.04px;top:397.75px;width:3.78px;height:30.95px;background:#00f800"></i><i style="left:408.8px;top:405.49px;width:3.78px;height:23.21px;background:#00d000"></i><i style="left:412.56px;top:413.23px;width:3.78px;height:15.47px;background:#00f800"></i><i style="left:416.32px;top:405.49px;width:3.78px;height:23.21px;background:#00d000"></i><i style="left:420.08px;top:405.49px;width:3.78px;height:23.21px;background:#00f800"></i><i style="left:423.84px;top:320.38px;width:3.78px;height:108.32px;background:#00d000"></i><i style="left:427.6px;top:289.43px;width:3.78px;height:139.27px;background:#00f800"></i><i style="left:431.36px;top:289.43px;width:3.78px;height:139.27px;background:#00d000"></i><i style="left:435.12px;top:289.43px;width:3.78px;height:139.27px;background:#00f800"></i><b style="left:56.34px;top:282.9px;height:5.6px"></b><b style="left:56.34px;top:290.63px;height:5.6px"></b><b style="left:56.34px;top:298.37px;height:5.6px"></b><b style="left:56.34px;top:306.11px;height:5.6px"></b><b style="left:56.34px;top:313.85px;height:5.6px"></b><b style="left:56.34px;top:321.58px;height:5.6px"></b><b style="left:56.34px;top:329.32px;height:5.6px"></b><b style="left:56.34px;top:337.06px;height:5.6px"></b><b style="left:56.34px;top:344.79px;height:5.6px"></b><b style="left:56.34px;top:352.53px;height:5.6px"></b><b style="left:56.34px;top:360.27px;height:5.6px"></b><b style="left:56.34px;top:368px;height:5.6px"></b><b style="left:56.34px;top:375.74px;height:5.6px"></b><b style="left:56.34px;top:383.48px;height:5.6px"></b><b style="left:56.34px;top:391.22px;height:5.6px"></b><b style="left:56.34px;top:398.95px;height:5.6px"></b><b style="left:56.34px;top:406.69px;height:5.6px"></b><b style="left:56.34px;top:414.43px;height:5.6px"></b><b style="left:56.34px;top:422.16px;height:5.6px"></b><b style="left:105.22px;top:282.9px;height:5.6px"></b><b style="left:105.22px;top:290.63px;height:5.6px"></b><b style="left:105.22px;top:298.37px;height:5.6px"></b><b style="left:105.22px;top:306.11px;height:5.6px"></b><b style="left:105.22px;top:313.85px;height:5.6px"></b><b style="left:105.22px;top:321.58px;height:5.6px"></b><b style="left:105.22px;top:329.32px;height:5.6px"></b><b style="left:105.22px;top:337.06px;height:5.6px"></b><b style="left:105.22px;top:344.79px;height:5.6px"></b><b style="left:105.22px;top:352.53px;height:5.6px"></b><b style="left:105.22px;top:360.27px;height:5.6px"></b><b style="left:105.22px;top:368px;height:5.6px"></b><b style="left:105.22px;top:375.74px;height:5.6px"></b><b style="left:105.22px;top:383.48px;height:5.6px"></b><b style="left:105.22px;top:391.22px;height:5.6px"></b><b style="left:105.22px;top:398.95px;height:5.6px"></b><b style="left:105.22px;top:406.69px;height:5.6px"></b><b style="left:105.22px;top:414.43px;height:5.6px"></b><b style="left:105.22px;top:422.16px;height:5.6px"></b><b style="left:154.1px;top:282.9px;height:5.6px"></b><b style="left:154.1px;top:290.63px;height:5.6px"></b><b style="left:154.1px;top:298.37px;height:5.6px"></b><b style="left:154.1px;top:306.11px;height:5.6px"></b><b style="left:154.1px;top:313.85px;height:5.6px"></b><b style="left:154.1px;top:321.58px;height:5.6px"></b><b style="left:154.1px;top:329.32px;height:5.6px"></b><b style="left:154.1px;top:337.06px;height:5.6px"></b><b style="left:154.1px;top:344.79px;height:5.6px"></b><b style="left:154.1px;top:352.53px;height:5.6px"></b><b style="left:154.1px;top:360.27px;height:5.6px"></b><b style="left:154.1px;top:368px;height:5.6px"></b><b style="left:154.1px;top:375.74px;height:5.6px"></b><b style="left:154.1px;top:383.48px;height:5.6px"></b><b style="left:154.1px;top:391.22px;height:5.6px"></b><b style="left:154.1px;top:398.95px;height:5.6px"></b><b style="left:154.1px;top:406.69px;height:5.6px"></b><b style="left:154.1px;top:414.43px;height:5.6px"></b><b style="left:154.1px;top:422.16px;height:5.6px"></b><b style="left:202.98px;top:282.9px;height:5.6px"></b><b style="left:202.98px;top:290.63px;height:5.6px"></b><b style="left:202.98px;top:298.37px;height:5.6px"></b><b style="left:202.98px;top:306.11px;height:5.6px"></b><b style="left:202.98px;top:313.85px;height:5.6px"></b><b style="left:202.98px;top:321.58px;height:5.6px"></b><b style="left:202.98px;top:329.32px;height:5.6px"></b><b style="left:202.98px;top:337.06px;height:5.6px"></b><b style="left:202.98px;top:344.79px;height:5.6px"></b><b style="left:202.98px;top:352.53px;height:5.6px"></b><b style="left:202.98px;top:360.27px;height:5.6px"></b><b style="left:202.98px;top:368px;height:5.6px"></b><b style="left:202.98px;top:375.74px;height:5.6px"></b><b style="left:202.98px;top:383.48px;height:5.6px"></b><b style="left:202.98px;top:391.22px;height:5.6px"></b><b style="left:202.98px;top:398.95px;height:5.6px"></b><b style="left:202.98px;top:406.69px;height:5.6px"></b><b style="left:202.98px;top:414.43px;height:5.6px"></b><b style="left:202.98px;top:422.16px;height:5.6px"></b><b style="left:251.86px;top:282.9px;height:5.6px"></b><b style="left:251.86px;top:290.63px;height:5.6px"></b><b style="left:251.86px;top:298.37px;height:5.6px"></b><b style="left:251.86px;top:306.11px;height:5.6px"></b><b style="left:251.86px;top:313.85px;height:5.6px"></b><b style="left:251.86px;top:321.58px;height:5.6px"></b><b style="left:251.86px;top:329.32px;height:5.6px"></b><b style="left:251.86px;top:337.06px;height:5.6px"></b><b style="left:251.86px;top:344.79px;height:5.6px"></b><b style="left:251.86px;top:352.53px;height:5.6px"></b><b style="left:251.86px;top:360.27px;height:5.6px"></b><b style="left:251.86px;top:368px;height:5.6px"></b><b style="left:251.86px;top:375.74px;height:5.6px"></b><b style="left:251.86px;top:383.48px;height:5.6px"></b><b style="left:251.86px;top:391.22px;height:5.6px"></b><b style="left:251.86px;top:398.95px;height:5.6px"></b><b style="left:251.86px;top:406.69px;height:5.6px"></b><b style="left:251.86px;top:414.43px;height:5.6px"></b><b style="left:251.86px;top:422.16px;height:5.6px"></b><b style="left:300.74px;top:282.9px;height:5.6px"></b><b style="left:300.74px;top:290.63px;height:5.6px"></b><b style="left:300.74px;top:298.37px;height:5.6px"></b><b style="left:300.74px;top:306.11px;height:5.6px"></b><b style="left:300.74px;top:313.85px;height:5.6px"></b><b style="left:300.74px;top:321.58px;height:5.6px"></b><b style="left:300.74px;top:329.32px;height:5.6px"></b><b style="left:300.74px;top:337.06px;height:5.6px"></b><b style="left:300.74px;top:344.79px;height:5.6px"></b><b style="left:300.74px;top:352.53px;height:5.6px"></b><b style="left:300.74px;top:360.27px;height:5.6px"></b><b style="left:300.74px;top:368px;height:5.6px"></b><b style="left:300.74px;top:375.74px;height:5.6px"></b><b style="left:300.74px;top:383.48px;height:5.6px"></b><b style="left:300.74px;top:391.22px;height:5.6px"></b><b style="left:300.74px;top:398.95px;height:5.6px"></b><b style="left:300.74px;top:406.69px;height:5.6px"></b><b style="left:300.74px;top:414.43px;height:5.6px"></b><b style="left:300.74px;top:422.16px;height:5.6px"></b><b style="left:345.86px;top:282.9px;height:5.6px"></b><b style="left:345.86px;top:290.63px;height:5.6px"></b><b style="left:345.86px;top:298.37px;height:5.6px"></b><b style="left:345.86px;top:306.11px;height:5.6px"></b><b style="left:345.86px;top:313.85px;height:5.6px"></b><b style="left:345.86px;top:321.58px;height:5.6px"></b><b style="left:345.86px;top:329.32px;height:5.6px"></b><b style="left:345.86px;top:337.06px;height:5.6px"></b><b style="left:345.86px;top:344.79px;height:5.6px"></b><b style="left:345.86px;top:352.53px;height:5.6px"></b><b style="left:345.86px;top:360.27px;height:5.6px"></b><b style="left:345.86px;top:368px;height:5.6px"></b><b style="left:345.86px;top:375.74px;height:5.6px"></b><b style="left:345.86px;top:383.48px;height:5.6px"></b><b style="left:345.86px;top:391.22px;height:5.6px"></b><b style="left:345.86px;top:398.95px;height:5.6px"></b><b style="left:345.86px;top:406.69px;height:5.6px"></b><b style="left:345.86px;top:414.43px;height:5.6px"></b><b style="left:345.86px;top:422.16px;height:5.6px"></b><b style="left:394.74px;top:282.9px;height:5.6px"></b><b style="left:394.74px;top:290.63px;height:5.6px"></b><b style="left:394.74px;top:298.37px;height:5.6px"></b><b style="left:394.74px;top:306.11px;height:5.6px"></b><b style="left:394.74px;top:313.85px;height:5.6px"></b><b style="left:394.74px;top:321.58px;height:5.6px"></b><b style="left:394.74px;top:329.32px;height:5.6px"></b><b style="left:394.74px;top:337.06px;height:5.6px"></b><b style="left:394.74px;top:344.79px;height:5.6px"></b><b style="left:394.74px;top:352.53px;height:5.6px"></b><b style="left:394.74px;top:360.27px;height:5.6px"></b><b style="left:394.74px;top:368px;height:5.6px"></b><b style="left:394.74px;top:375.74px;height:5.6px"></b><b style="left:394.74px;top:383.48px;height:5.6px"></b><b style="left:394.74px;top:391.22px;height:5.6px"></b><b style="left:394.74px;top:398.95px;height:5.6px"></b><b style="left:394.74px;top:406.69px;height:5.6px"></b><b style="left:394.74px;top:414.43px;height:5.6px"></b><b style="left:394.74px;top:422.16px;height:5.6px"></b><s style="left:-1.04px;top:103.41px">.0</s><s style="left:190.72px;top:111.15px">Frequency [MHz]</s><s style="left:-1.04px;top:118.89px">208</s><s style="left:77.92px;top:118.89px">Avg</s><s style="left:217.04px;top:118.89px">Core 0</s><s style="left:202px;top:273.63px">Util [%]</s><s style="left:-1.04px;top:281.37px">00</s><s style="left:29.04px;top:281.37px">Avg</s><s style="left:70.4px;top:281.37px">Core 0</s><s style="left:119.28px;top:281.37px">Core 1</s><s style="left:168.16px;top:281.37px">Core 2</s><s style="left:217.04px;top:281.37px">Core 3</s><s style="left:265.92px;top:281.37px">Core 4</s><s style="left:314.8px;top:281.37px">Core 5</s><s style="left:359.92px;top:281.37px">Core 6</s><s style="left:408.8px;top:281.37px">Core 7</s></div>

<div id="term">
 <svg class="abs" style="left:1.5px;top:1.5px" width="15" height="14" viewBox="0 0 15 14">
  <path d="M1 1 L5 1 L7.5 5 L10 1 L14 1 L9.5 7 L14 13 L10 13 L7.5 9 L5 13 L1 13 L5.5 7 Z" fill="#e8603c" opacity="0.85"/>
  <path d="M3.5 2 L11.5 2 L11.5 3.5 L8.5 3.5 L8.5 12.5 L6.5 12.5 L6.5 3.5 L3.5 3.5 Z" fill="#3a2f8f"/>
 </svg>
 <div id="termtitle">myir@myd-lr3576x-debian: ~/Downloads/opencv-4.11</div>
 <svg class="abs" style="left:251px;top:3.5px" width="55" height="11" viewBox="0 0 55 11">
  <path d="M1.5 7.5 L4.5 4.5 L7.5 7.5" stroke="#333" stroke-width="1.4" fill="none"/>
  <path d="M16 7 L21 7" stroke="#333" stroke-width="1.4"/>
  <rect x="30.2" y="2.7" width="5.2" height="5.2" stroke="#333" stroke-width="1.3" fill="none"/>
  <path d="M44.5 2.5 L49.5 7.7 M49.5 2.5 L44.5 7.7" stroke="#333" stroke-width="1.4"/>
 </svg>
 <div id="termbody"><p style="top:1.7px"><span class="g">ication.cpp.o</span></p><p style="top:9.44px"><span class="w">[ 11%] </span><span class="g">Building CXX object dnn/CMakeFiles/example_dnn_face_detect.dir/face_detec</span></p><p style="top:17.18px"><span class="g">t.cpp.o</span></p><p style="top:24.92px"><span class="w">[ 12%] </span><span class="g">Building CXX object dnn/CMakeFiles/example_dnn_object_detection.dir/objec</span></p><p style="top:32.66px"><span class="g">t_detection.cpp.o</span></p><p style="top:40.4px"><span class="w">[ 14%] </span><span class="g">Building CXX object dnn/CMakeFiles/example_dnn_openpose.dir/openpose.cpp.</span></p><p style="top:48.14px"><span class="g">o</span></p><p style="top:55.88px"><span class="w">[ 16%] </span><span class="k">Linking CXX executable example_dnn_classification</span></p><p style="top:63.62px"><span class="w">[ 18%] </span><span class="k">Linking CXX executable example_dnn_nanotrack_tracker</span></p><p style="top:71.36px"><span class="w">[ 20%] </span><span class="k">Linking CXX executable example_dnn_dasiamrpn_tracker</span></p><p style="top:79.1px"><span class="w">[ 22%] </span><span class="k">Linking CXX executable example_dnn_human_parsing</span></p><p style="top:86.84px"><span class="w">[ 24%] </span><span class="k">Linking CXX executable example_dnn_openpose</span></p><p style="top:94.58px"><span class="w">[ 25%] </span><span class="k">Linking CXX executable example_dnn_face_detect</span></p><p style="top:102.32px"><span class="w">[ 25%] Built target example_dnn_human_parsing</span></p><p style="top:110.06px"><span class="w">[ 27%] </span><span class="k">Linking CXX executable example_dnn_colorization</span></p><p style="top:117.8px"><span class="w">[ 29%] </span><span class="g">Building CXX object dnn/CMakeFiles/example_dnn_person_reid.dir/person_rei</span></p><p style="top:125.54px"><span class="g">d.cpp.o</span></p><p style="top:133.28px"><span class="w">[ 29%] Built target example_dnn_nanotrack_tracker</span></p><p style="top:141.02px"><span class="w">[ 29%] Built target example_dnn_openpose</span></p><p style="top:148.76px"><span class="w">[ 31%] </span><span class="g">Building CXX object dnn/CMakeFiles/example_dnn_scene_text_detection.dir/s</span></p><p style="top:156.5px"><span class="g">cene_text_detection.cpp.o</span></p><p style="top:164.24px"><span class="w">[ 33%] </span><span class="g">Building CXX object dnn/CMakeFiles/example_dnn_scene_text_recognition.dir</span></p><p style="top:171.98px"><span class="g">/scene_text_recognition.cpp.o</span></p><div id="cursor"></div><div id="discuz">Discuz!</div></div>
</div>

<div class="abs" style="left:657.8px;top:10px;width:406.7px;height:306.3px;background:#f2f2f2;border:1px solid #b4b4b4;border-radius:4px 4px 0 0;box-shadow:1px 4px 9px rgba(0,0,0,0.24)"></div><div class="abs" style="left:659.5px;top:67.6px;width:404px;height:1px;background:#dedede"></div><div class="abs" style="left:659.5px;top:68.6px;width:107px;height:246px;background:#f7f7f7"></div><div class="abs" style="left:766.4px;top:68.6px;width:1px;height:246px;background:#e0e0e0"></div><div class="abs" style="left:767.4px;top:68.6px;width:296px;height:228.6px;background:#f6f6f6"></div><div class="abs" style="left:767.4px;top:297.2px;width:296px;height:1px;background:#e2e2e2"></div><div class="abs" style="left:767.4px;top:298.2px;width:296px;height:16.3px;background:#f1f1f1"></div><svg class="abs" style="left:661px;top:12.5px" width="15" height="13" viewBox="0 0 15 13"><path d="M0.5 1.5 Q0.5 0.5 1.5 0.5 L5.5 0.5 L7 2 L13.5 2 Q14.5 2 14.5 3 L14.5 12.5 L0.5 12.5 Z" fill="#2f6fc0"/><path d="M0.5 4 L14.5 3.6 L14.5 12.5 L0.5 12.5 Z" fill="#8cbde8"/><path d="M0.5 4 L14.5 3.6 L14.5 5 L0.5 5.4 Z" fill="#5b9bd8"/></svg><div class="tt" style="left:812.5px;top:15.6px;font-size:8.1px;font-weight:bold;color:#5e5e5e;letter-spacing:0.35px">cpp - Thunar</div><svg class="abs" style="left:1005px;top:14px" width="56" height="12" viewBox="0 0 56 12"><path d="M3.5 7.5 L6.5 4.5 L9.5 7.5" stroke="#7a7a7a" stroke-width="1.3" fill="none"/><path d="M18 9 L23 9" stroke="#7a7a7a" stroke-width="1.3"/><rect x="32.3" y="3.3" width="5" height="5" stroke="#7a7a7a" stroke-width="1.3" fill="none"/><path d="M47 3 L52 8.3 M52 3 L47 8.3" stroke="#7a7a7a" stroke-width="1.3"/></svg><div class="tt" style="left:666.2px;top:30.2px;font-size:8.3px;color:#8a8a8a"><svg style="display:inline-block;vertical-align:baseline;position:relative;top:0.60px;width:7.89px;height:7.89px;margin-right:0.42px" viewBox="-0.3 -0.3 10.6 10.6"><path d="M5 0.5V2 M1 2.5H9 M2.8 3.2Q5 8 9 9.5 M7.2 3.2Q5 8 1 9.5" stroke="#8a8a8a" stroke-width="0.95" fill="none" stroke-linecap="square" opacity="1.0"/></svg><svg style="display:inline-block;vertical-align:baseline;position:relative;top:0.60px;width:7.89px;height:7.89px;margin-right:0.42px" viewBox="-0.3 -0.3 10.6 10.6"><path d="M2.5 0.5L1 4 M2 3V9.5 M5.5 1L4.5 3.5 M4.5 3H9 M4 6H9.5 M7 0.5V9.5" stroke="#8a8a8a" stroke-width="0.95" fill="none" stroke-linecap="square" opacity="1.0"/></svg>(F)</div><div class="tt" style="left:702.4px;top:30.2px;font-size:8.3px;color:#8a8a8a"><svg style="display:inline-block;vertical-align:baseline;position:relative;top:0.60px;width:7.89px;height:7.89px;margin-right:0.42px" viewBox="-0.3 -0.3 10.6 10.6"><path d="M2.5 0.5L1 3.5H3.5L1 6.5H4 M0.5 9L4 7.5 M6.5 0.3V1 M4.5 1.5H9 M4.8 1.5V6Q4.8 8.5 4 9.5 M4.8 3.5H9V1.5 M5.8 5H9V9.5 M5.8 5V9.5 M7.4 5V9.5" stroke="#8a8a8a" stroke-width="0.95" fill="none" stroke-linecap="square" opacity="1.0"/></svg><svg style="display:inline-block;vertical-align:baseline;position:relative;top:0.60px;width:7.89px;height:7.89px;margin-right:0.42px" viewBox="-0.3 -0.3 10.6 10.6"><path d="M0.5 2H4 M2 0.5L1 6H4 M2.5 3.5V9.5 M0.5 8H4 M5 0.8H9V3H5Z M4.5 4H9.5 M5.5 4V9.5 M8.5 4V9.5 M5.5 6H8.5 M5.5 8H8.5" stroke="#8a8a8a" stroke-width="0.95" fill="none" stroke-linecap="square" opacity="1.0"/></svg>(E)</div><div class="tt" style="left:738.5px;top:30.2px;font-size:8.3px;color:#8a8a8a"><svg style="display:inline-block;vertical-align:baseline;position:relative;top:0.60px;width:7.89px;height:7.89px;margin-right:0.42px" viewBox="-0.3 -0.3 10.6 10.6"><path d="M1.5 0.5L2.5 1.5 M0.5 3H3.5L1 7 M2.5 5V9.5 M3 6L4 7 M5 1H9V6H5Z M5 3.5H9 M6.3 6Q6 8.5 4.5 9.5 M7.7 6V9Q7.7 9.5 9.5 9.5" stroke="#8a8a8a" stroke-width="0.95" fill="none" stroke-linecap="square" opacity="1.0"/></svg><svg style="display:inline-block;vertical-align:baseline;position:relative;top:0.60px;width:7.89px;height:7.89px;margin-right:0.42px" viewBox="-0.3 -0.3 10.6 10.6"><path d="M1 1H9V9.5H1Z M4.5 2L2.8 4 M4 2.8H7Q6 5 2.8 6 M4 4Q6 5.5 7.5 5.8 M4 7L6 7.5 M3.5 8.3L6.5 8.8" stroke="#8a8a8a" stroke-width="0.95" fill="none" stroke-linecap="square" opacity="1.0"/></svg>(V)</div><div class="tt" style="left:775.2px;top:30.2px;font-size:8.3px;color:#8a8a8a"><svg style="display:inline-block;vertical-align:baseline;position:relative;top:0.60px;width:7.89px;height:7.89px;margin-right:0.42px" viewBox="-0.3 -0.3 10.6 10.6"><path d="M0.5 2H4 M2 0.5L1 6H4 M2.5 3.5V9.5 M0.5 8H4 M5 2.5H9.5 M7.5 0.5L6 5.5H9L7 7.5 M6 7.5L8 9" stroke="#8a8a8a" stroke-width="0.95" fill="none" stroke-linecap="square" opacity="1.0"/></svg><svg style="display:inline-block;vertical-align:baseline;position:relative;top:0.60px;width:7.89px;height:7.89px;margin-right:0.42px" viewBox="-0.3 -0.3 10.6 10.6"><path d="M0.5 1H6 M3.5 1L1.5 4.5H5.5 M4.5 3.5L5 4.5 M3.2 4.5V9 M1 7H5.5 M0.5 9.3H6 M7 2V7 M9 0.5V9Q9 9.5 8 9.5" stroke="#8a8a8a" stroke-width="0.95" fill="none" stroke-linecap="square" opacity="1.0"/></svg>(G)</div><div class="tt" style="left:813.9px;top:30.2px;font-size:8.3px;color:#8a8a8a"><svg style="display:inline-block;vertical-align:baseline;position:relative;top:0.60px;width:7.89px;height:7.89px;margin-right:0.42px" viewBox="-0.3 -0.3 10.6 10.6"><path d="M1.5 2.5H8.5V6.5Q8.5 7.5 7 7 M0.8 5H9.2 M5.5 0.5V9.5 M7.5 0.5L8.5 1.5" stroke="#8a8a8a" stroke-width="0.95" fill="none" stroke-linecap="square" opacity="1.0"/></svg><svg style="display:inline-block;vertical-align:baseline;position:relative;top:0.60px;width:7.89px;height:7.89px;margin-right:0.42px" viewBox="-0.3 -0.3 10.6 10.6"><path d="M1 1.5H4 M2 0.5L1 2.5 M6 1.5H9 M7 0.5L6 2.5 M5 3L1.5 5.5 M5 3L8.5 5.5 M3 5.5H7 M2 7L3 8.5 M5 6.5V8.5 M8 7L7 8.5 M1 9.5H9" stroke="#8a8a8a" stroke-width="0.95" fill="none" stroke-linecap="square" opacity="1.0"/></svg>(B)</div><div class="tt" style="left:850.5px;top:30.2px;font-size:8.3px;color:#8a8a8a"><svg style="display:inline-block;vertical-align:baseline;position:relative;top:0.60px;width:7.89px;height:7.89px;margin-right:0.42px" viewBox="-0.3 -0.3 10.6 10.6"><path d="M0.5 1.5H4.5 M0.5 3H4.5 M2.5 0.5V5 M5.5 0.8H8.5Q8.5 2.5 7 3 M5.5 0.8V5 M2 6H8V8.5 M2 6V9.5 M5 5V9.5" stroke="#8a8a8a" stroke-width="0.95" fill="none" stroke-linecap="square" opacity="1.0"/></svg><svg style="display:inline-block;vertical-align:baseline;position:relative;top:0.60px;width:7.89px;height:7.89px;margin-right:0.42px" viewBox="-0.3 -0.3 10.6 10.6"><path d="M1 1H4.5V7H1Z M1 3H4.5 M1 5H4.5 M0.5 8.5L5 7.5 M5.5 3H9Q9 8.5 8 9.5 M7 0.5V4Q7 8 5 9.5" stroke="#8a8a8a" stroke-width="0.95" fill="none" stroke-linecap="square" opacity="1.0"/></svg>(H)</div><svg class="abs" style="left:668px;top:47px" width="88" height="17" viewBox="0 0 88 17"><path d="M10.5 2.5 L3.5 8.5 L10.5 14.5" stroke="#7c7c7c" stroke-width="1.6" fill="none"/><path d="M27 2.5 L33.5 8.5 L27 14.5" stroke="#c4c4c4" stroke-width="1.6" fill="none"/><path d="M47 11.5 L53 5.5 L59 11.5" stroke="#7c7c7c" stroke-width="1.8" fill="none"/><path d="M70.5 9 L76.5 3.5 L82.5 9 M72.3 7.8 V14.3 H80.7 V7.8 M75 14.3 V10.5 H78 V14.3" stroke="#7c7c7c" stroke-width="1.6" fill="none"/></svg><div class="abs" style="left:756.3px;top:46.9px;width:278.7px;height:18.7px;background:#fcfcfc;border:1px solid #dcdcdc;border-radius:4px"></div><svg class="abs" style="left:761.5px;top:50.8px" width="11" height="10" viewBox="0 0 11 10"><path d="M0.3 1 Q0.3 0.3 1 0.3 L4 0.3 L5 1.5 L10 1.5 Q10.7 1.5 10.7 2.2 L10.7 9.7 L0.3 9.7 Z" fill="#3274c2"/><path d="M0.3 3.2 L10.7 3 L10.7 9.7 L0.3 9.7 Z" fill="#8fc0ea"/></svg><div class="tt" style="left:775px;top:50.8px;font-size:8.7px;color:#474747">/home/myir/Downloads/opencv-4.11.0/samples/cpp/</div><svg class="abs" style="left:1039px;top:47px" width="18" height="18" viewBox="0 0 18 18"><circle cx="7.2" cy="7.3" r="5.2" stroke="#7a7a7a" stroke-width="1.6" fill="none"/><path d="M11 11.2 L15.5 15.7" stroke="#7a7a7a" stroke-width="1.8"/></svg><div class="tt" style="left:666.3px;top:71.2px;font-size:8.3px"><svg style="display:inline-block;vertical-align:baseline;position:relative;top:0.60px;width:7.89px;height:7.89px;margin-right:0.11px" viewBox="-0.3 -0.3 10.6 10.6"><path d="M2.5 0.5L1 4 M2 3V9.5 M6.5 0.5V2 M4 2.5H9.5 M5 4L6 7.5 M8.5 4L7.5 7.5 M4 9H9.5" stroke="#333" stroke-width="1.35" fill="none" stroke-linecap="square" opacity="1.0"/></svg><svg style="display:inline-block;vertical-align:baseline;position:relative;top:0.60px;width:7.89px;height:7.89px;margin-right:0.11px" viewBox="-0.3 -0.3 10.6 10.6"><path d="M1 1H9V3.5H1Z M3.7 1V3.5 M6.3 1V3.5 M0.8 4.5H9.2 M5 3.5V5 M2.5 5.5H7.5V9H2.5Z M2.5 6.7H7.5 M1 9.5H9" stroke="#333" stroke-width="1.35" fill="none" stroke-linecap="square" opacity="1.0"/></svg></div><div class="tt" style="left:666.0px;top:150.0px;font-size:8.3px"><svg style="display:inline-block;vertical-align:baseline;position:relative;top:0.60px;width:7.89px;height:7.89px;margin-right:0.11px" viewBox="-0.3 -0.3 10.6 10.6"><path d="M1.5 1L3 2 M1 4H3V8.5L4 7.5 M5.5 0.5V2.5Q5.5 4 4.5 4.5 M5.5 0.8H8.5V3.5Q8.5 4.5 9.5 4.5 M4.5 5.5H9 M8.5 5.5Q7 8.5 4.5 9.5 M5 6.5Q7 9 9.5 9.5" stroke="#333" stroke-width="1.35" fill="none" stroke-linecap="square" opacity="1.0"/></svg><svg style="display:inline-block;vertical-align:baseline;position:relative;top:0.60px;width:7.89px;height:7.89px;margin-right:0.11px" viewBox="-0.3 -0.3 10.6 10.6"><path d="M3 0.5L1 3 M3 1.2H7.5Q6 4 1 5 M4 2.5Q6 4.5 9.5 5 M2 5.8H8V9.5H2Z M5 5.8V9.5 M2 7.6H8" stroke="#333" stroke-width="1.35" fill="none" stroke-linecap="square" opacity="1.0"/></svg></div><svg class="abs" style="left:671.5px;top:85.8px" width="14" height="13" viewBox="0 0 14 13"><rect x="0.3" y="0.3" width="13.4" height="9.4" rx="0.8" fill="#2d66c8"/><rect x="5" y="9.5" width="4" height="2.2" fill="#333c48"/><rect x="3.5" y="11.2" width="7" height="1.5" fill="#333c48"/></svg><div class="tt" style="left:688.6px;top:86.8px;font-size:8.3px"><svg style="display:inline-block;vertical-align:baseline;position:relative;top:0.60px;width:7.89px;height:7.89px;margin-right:0.21px" viewBox="-0.3 -0.3 10.6 10.6"><path d="M1.5 1L3 2 M1 4H3V8.5L4 7.5 M4.5 4.5H9.5 M7 0.5V9.5" stroke="#444" stroke-width="1.0" fill="none" stroke-linecap="square" opacity="1.0"/></svg><svg style="display:inline-block;vertical-align:baseline;position:relative;top:0.60px;width:7.89px;height:7.89px;margin-right:0.21px" viewBox="-0.3 -0.3 10.6 10.6"><path d="M1 1.5H4 M6 1.5H9 M2 3.2H8V7H2Z M2 5.1H8 M1 8H9 M3.5 7V9.5 M6.5 7V9.5" stroke="#444" stroke-width="1.0" fill="none" stroke-linecap="square" opacity="1.0"/></svg><svg style="display:inline-block;vertical-align:baseline;position:relative;top:0.60px;width:7.89px;height:7.89px;margin-right:0.21px" viewBox="-0.3 -0.3 10.6 10.6"><path d="M1 3H4 M2.5 0.5V9.5 M2.5 4L1 7 M2.5 4L4 6 M5 1H8V8.5Q8 9.5 9.5 9.5 M5 1V6Q5 8.5 4 9.5" stroke="#444" stroke-width="1.0" fill="none" stroke-linecap="square" opacity="1.0"/></svg></div><svg class="abs" style="left:672px;top:101.5px" width="14" height="12" viewBox="0 0 14 12"><path d="M1 6 L7 1 L13 6 M2.8 5 V11.3 H11.2 V5" stroke="#8a8a8a" stroke-width="1.1" fill="#ececec"/><path d="M5.5 11.3 V8 H8.5 V11.3" stroke="#8a8a8a" stroke-width="1" fill="none"/></svg><div class="tt" style="left:688.5px;top:102.2px;font-size:8.8px;color:#3c3c3c">myir</div><svg class="abs" style="left:672px;top:117.2px" width="14" height="13" viewBox="0 0 14 13"><path d="M0.3 1 Q0.3 0.3 1 0.3 L5 0.3 L6.2 1.6 L13 1.6 Q13.7 1.6 13.7 2.3 L13.7 12.7 L0.3 12.7 Z" fill="#3a7bd0"/><path d="M0.3 3.6 L13.7 3.3 L13.7 12.7 L0.3 12.7 Z" fill="#9ac6ee"/><rect x="5" y="6.5" width="4" height="3" stroke="#5a8fd0" stroke-width="0.7" fill="none"/></svg><div class="tt" style="left:688.5px;top:117.8px;font-size:8.6px;color:#3c3c3c">Desktop</div><svg class="abs" style="left:672px;top:132.8px" width="14" height="13" viewBox="0 0 14 13"><rect x="0.5" y="0.5" width="13" height="4" fill="#bdbdbd"/><rect x="1.5" y="4.5" width="11" height="8.2" fill="#2fb36b"/><circle cx="7" cy="8.6" r="2" stroke="#e8f8ee" stroke-width="0.9" fill="none"/></svg><div class="tt" style="left:688.6px;top:133.8px;font-size:8.3px"><svg style="display:inline-block;vertical-align:baseline;position:relative;top:0.60px;width:7.89px;height:7.89px;margin-right:0.21px" viewBox="-0.3 -0.3 10.6 10.6"><path d="M1 1H9V9.5H1Z M3.5 3.5H6.5V7H3.5Z" stroke="#444" stroke-width="1.0" fill="none" stroke-linecap="square" opacity="1.0"/></svg><svg style="display:inline-block;vertical-align:baseline;position:relative;top:0.60px;width:7.89px;height:7.89px;margin-right:0.21px" viewBox="-0.3 -0.3 10.6 10.6"><path d="M1.5 1V7L4 6 M3.5 0.5V9.5 M6 0.5L5 3.5 M5.5 2.5H9.5 M8.5 2.5Q7.5 7 4.5 9.5 M5.5 4Q7 8 9.5 9.5" stroke="#444" stroke-width="1.0" fill="none" stroke-linecap="square" opacity="1.0"/></svg><svg style="display:inline-block;vertical-align:baseline;position:relative;top:0.60px;width:7.89px;height:7.89px;margin-right:0.21px" viewBox="-0.3 -0.3 10.6 10.6"><path d="M2.5 0.5V2 M0.5 2.5H4.5 M1.5 4L2 7 M3.5 4L3 7 M0.5 8H4.5 M7 0.5V5 M7 2.5H9.5 M5 5H9.5V9.5H5Z" stroke="#444" stroke-width="1.0" fill="none" stroke-linecap="square" opacity="1.0"/></svg></div><svg class="abs" style="left:673px;top:163.6px" width="11" height="12" viewBox="0 0 11 12"><rect x="0.4" y="0.4" width="10.2" height="11.2" rx="0.8" fill="#ececec" stroke="#c9c9c9" stroke-width="0.8"/><rect x="0.8" y="9" width="9.4" height="2.2" fill="#9a9a9a"/></svg><div class="tt" style="left:688.6px;top:164.6px;font-size:8.3px"><svg style="display:inline-block;vertical-align:baseline;position:relative;top:0.60px;width:7.89px;height:7.89px;margin-right:0.21px" viewBox="-0.3 -0.3 10.6 10.6"><path d="M5 0.5V2 M1 2.5H9 M2.8 3.2Q5 8 9 9.5 M7.2 3.2Q5 8 1 9.5" stroke="#444" stroke-width="1.0" fill="none" stroke-linecap="square" opacity="1.0"/></svg><svg style="display:inline-block;vertical-align:baseline;position:relative;top:0.60px;width:7.89px;height:7.89px;margin-right:0.21px" viewBox="-0.3 -0.3 10.6 10.6"><path d="M2.5 0.5L1 4 M2 3V9.5 M5.5 1L4.5 3.5 M4.5 3H9 M4 6H9.5 M7 0.5V9.5" stroke="#444" stroke-width="1.0" fill="none" stroke-linecap="square" opacity="1.0"/></svg><svg style="display:inline-block;vertical-align:baseline;position:relative;top:0.60px;width:7.89px;height:7.89px;margin-right:0.21px" viewBox="-0.3 -0.3 10.6 10.6"><path d="M8.5 0.8L2 1.8 M5 1.8L2.5 4.5H7.5 M6 3L3 6.5H8.5 M7 5.5L8.5 7 M5 6.5V9.5 M3 8L1 9.5 M7 8L9 9.5" stroke="#444" stroke-width="1.0" fill="none" stroke-linecap="square" opacity="1.0"/></svg><svg style="display:inline-block;vertical-align:baseline;position:relative;top:0.60px;width:7.89px;height:7.89px;margin-right:0.21px" viewBox="-0.3 -0.3 10.6 10.6"><path d="M2.5 0.5L1 3.5H3.5L1 6.5H4 M0.5 9L4 7.5 M6.5 0.5V2 M4.5 2.5H9.5 M6.5 3L5 5.5H9 M8 4.5L9 6 M6 6V8.5Q6 9.5 4.5 9.5 M7.8 6V9Q7.8 9.5 9.5 9.5" stroke="#444" stroke-width="1.0" fill="none" stroke-linecap="square" opacity="1.0"/></svg></div><div class="abs" style="left:767.4px;top:68.6px;width:296px;height:228.6px;overflow:hidden"><svg class="abs" style="left:33.8px;top:3.2px" width="28" height="34" viewBox="0 0 28 34"><path d="M1.5 0.5 H19.5 L26.5 7.5 V33.5 H1.5 Z" fill="#f0f0f0" stroke="#e2e2e2" stroke-width="1"/><path d="M19.5 0.5 V7.5 H26.5 Z" fill="#d6d6d6"/><path d="M5 7.3 H17 M5 10 H17 M5 13 H23 M5 16 H23 M5 19 H23 M5 22 H23 M5 25 H23 M5 28.3 H23" stroke="#d2d2d2" stroke-width="1.2"/></svg><svg class="abs" style="left:123.4px;top:3.2px" width="28" height="34" viewBox="0 0 28 34"><path d="M1.5 0.5 H19.5 L26.5 7.5 V33.5 H1.5 Z" fill="#f0f0f0" stroke="#e2e2e2" stroke-width="1"/><path d="M19.5 0.5 V7.5 H26.5 Z" fill="#d6d6d6"/><path d="M5 7.3 H17 M5 10 H17 M5 13 H23 M5 16 H23 M5 19 H23 M5 22 H23 M5 25 H23 M5 28.3 H23" stroke="#d2d2d2" stroke-width="1.2"/></svg><svg class="abs" style="left:213.1px;top:3.2px" width="28" height="34" viewBox="0 0 28 34"><path d="M1.5 0.5 H19.5 L26.5 7.5 V33.5 H1.5 Z" fill="#f0f0f0" stroke="#e2e2e2" stroke-width="1"/><path d="M19.5 0.5 V7.5 H26.5 Z" fill="#d6d6d6"/><path d="M5 7.3 H17 M5 10 H17 M5 13 H23 M5 16 H23 M5 19 H23 M5 22 H23 M5 25 H23 M5 28.3 H23" stroke="#d2d2d2" stroke-width="1.2"/></svg><svg class="abs" style="left:33.8px;top:70px" width="28" height="34" viewBox="0 0 28 34"><path d="M1.5 0.5 H19.5 L26.5 7.5 V33.5 H1.5 Z" fill="#f0f0f0" stroke="#e2e2e2" stroke-width="1"/><path d="M19.5 0.5 V7.5 H26.5 Z" fill="#d6d6d6"/><path d="M5 7.3 H17 M5 10 H17 M5 13 H23 M5 16 H23 M5 19 H23 M5 22 H23 M5 25 H23 M5 28.3 H23" stroke="#d2d2d2" stroke-width="1.2"/></svg><svg class="abs" style="left:123.4px;top:70px" width="28" height="34" viewBox="0 0 28 34"><path d="M1.5 0.5 H19.5 L26.5 7.5 V33.5 H1.5 Z" fill="#f0f0f0" stroke="#e2e2e2" stroke-width="1"/><path d="M19.5 0.5 V7.5 H26.5 Z" fill="#d6d6d6"/><path d="M5 7.3 H17 M5 10 H17 M5 13 H23 M5 16 H23 M5 19 H23 M5 22 H23 M5 25 H23 M5 28.3 H23" stroke="#d2d2d2" stroke-width="1.2"/></svg><svg class="abs" style="left:213.1px;top:70px" width="28" height="34" viewBox="0 0 28 34"><path d="M1.5 0.5 H19.5 L26.5 7.5 V33.5 H1.5 Z" fill="#f0f0f0" stroke="#e2e2e2" stroke-width="1"/><path d="M19.5 0.5 V7.5 H26.5 Z" fill="#d6d6d6"/><path d="M5 7.3 H17 M5 10 H17 M5 13 H23 M5 16 H23 M5 19 H23 M5 22 H23 M5 25 H23 M5 28.3 H23" stroke="#d2d2d2" stroke-width="1.2"/></svg><svg class="abs" style="left:33.8px;top:128.4px" width="28" height="34" viewBox="0 0 28 34"><path d="M1.5 0.5 H19.5 L26.5 7.5 V33.5 H1.5 Z" fill="#f0f0f0" stroke="#e2e2e2" stroke-width="1"/><path d="M19.5 0.5 V7.5 H26.5 Z" fill="#d6d6d6"/><path d="M5 7.3 H17 M5 10 H17 M5 13 H23 M5 16 H23 M5 19 H23 M5 22 H23 M5 25 H23 M5 28.3 H23" stroke="#d2d2d2" stroke-width="1.2"/></svg><svg class="abs" style="left:123.4px;top:128.4px" width="28" height="34" viewBox="0 0 28 34"><path d="M1.5 0.5 H19.5 L26.5 7.5 V33.5 H1.5 Z" fill="#f0f0f0" stroke="#e2e2e2" stroke-width="1"/><path d="M19.5 0.5 V7.5 H26.5 Z" fill="#d6d6d6"/><path d="M5 7.3 H17 M5 10 H17 M5 13 H23 M5 16 H23 M5 19 H23 M5 22 H23 M5 25 H23 M5 28.3 H23" stroke="#d2d2d2" stroke-width="1.2"/></svg><svg class="abs" style="left:213.1px;top:128.4px" width="28" height="34" viewBox="0 0 28 34"><path d="M1.5 0.5 H19.5 L26.5 7.5 V33.5 H1.5 Z" fill="#f0f0f0" stroke="#e2e2e2" stroke-width="1"/><path d="M19.5 0.5 V7.5 H26.5 Z" fill="#d6d6d6"/><path d="M5 7.3 H17 M5 10 H17 M5 13 H23 M5 16 H23 M5 19 H23 M5 22 H23 M5 25 H23 M5 28.3 H23" stroke="#d2d2d2" stroke-width="1.2"/></svg><svg class="abs" style="left:33.8px;top:194.4px" width="28" height="34" viewBox="0 0 28 34"><path d="M1.5 0.5 H19.5 L26.5 7.5 V33.5 H1.5 Z" fill="#f0f0f0" stroke="#e2e2e2" stroke-width="1"/><path d="M19.5 0.5 V7.5 H26.5 Z" fill="#d6d6d6"/><path d="M5 7.3 H17 M5 10 H17 M5 13 H23 M5 16 H23 M5 19 H23 M5 22 H23 M5 25 H23 M5 28.3 H23" stroke="#d2d2d2" stroke-width="1.2"/></svg><svg class="abs" style="left:123.4px;top:194.4px" width="28" height="34" viewBox="0 0 28 34"><path d="M1.5 0.5 H19.5 L26.5 7.5 V33.5 H1.5 Z" fill="#f0f0f0" stroke="#e2e2e2" stroke-width="1"/><path d="M19.5 0.5 V7.5 H26.5 Z" fill="#d6d6d6"/><path d="M5 7.3 H17 M5 10 H17 M5 13 H23 M5 16 H23 M5 19 H23 M5 22 H23 M5 25 H23 M5 28.3 H23" stroke="#d2d2d2" stroke-width="1.2"/></svg><svg class="abs" style="left:213.1px;top:194.4px" width="28" height="34" viewBox="0 0 28 34"><path d="M1.5 0.5 H19.5 L26.5 7.5 V33.5 H1.5 Z" fill="#f0f0f0" stroke="#e2e2e2" stroke-width="1"/><path d="M19.5 0.5 V7.5 H26.5 Z" fill="#d6d6d6"/><path d="M5 7.3 H17 M5 10 H17 M5 13 H23 M5 16 H23 M5 19 H23 M5 22 H23 M5 25 H23 M5 28.3 H23" stroke="#d2d2d2" stroke-width="1.2"/></svg><div class="abs" style="left:5.8px;top:40.2px;width:84px;height:22.4px;background:#fdfdfd;border-radius:2px"></div><div class="tt" style="left:5.8px;top:41.7px;width:84px;text-align:center;font-size:8.8px;color:#333">cloning_gui.cpp</div><div class="abs" style="left:95.4px;top:40.2px;width:84px;height:22.4px;background:#fdfdfd;border-radius:2px"></div><div class="tt" style="left:95.4px;top:41.7px;width:84px;text-align:center;font-size:8.8px;color:#333">CMakeLists.txt</div><div class="abs" style="left:185.1px;top:40.2px;width:84px;height:22.4px;background:#fdfdfd;border-radius:2px"></div><div class="tt" style="left:185.1px;top:41.7px;width:84px;text-align:center;font-size:8.8px;color:#333">connected_compon</div><div class="tt" style="left:185.1px;top:51.6px;width:84px;text-align:center;font-size:8.8px;color:#333">ents.cpp</div><div class="abs" style="left:5.8px;top:105.9px;width:84px;height:13.7px;background:#fdfdfd;border-radius:2px"></div><div class="tt" style="left:5.8px;top:107.4px;width:84px;text-align:center;font-size:8.8px;color:#333">contours2.cpp</div><div class="abs" style="left:95.4px;top:105.9px;width:84px;height:13.7px;background:#fdfdfd;border-radius:2px"></div><div class="tt" style="left:95.4px;top:107.4px;width:84px;text-align:center;font-size:8.8px;color:#333">convexhull.cpp</div><div class="abs" style="left:185.1px;top:105.9px;width:84px;height:13.7px;background:#fdfdfd;border-radius:2px"></div><div class="tt" style="left:185.1px;top:107.4px;width:84px;text-align:center;font-size:8.8px;color:#333">cout_mat.cpp</div><div class="abs" style="left:5.8px;top:163px;width:84px;height:22px;background:#fdfdfd;border-radius:2px"></div><div class="tt" style="left:5.8px;top:164.5px;width:84px;text-align:center;font-size:8.8px;color:#333">create_mask.cpp</div><div class="abs" style="left:95.4px;top:163px;width:84px;height:22px;background:#fdfdfd;border-radius:2px"></div><div class="tt" style="left:95.4px;top:164.5px;width:84px;text-align:center;font-size:8.8px;color:#333">dbt_face_detection.</div><div class="tt" style="left:95.4px;top:174.4px;width:84px;text-align:center;font-size:8.8px;color:#333">cpp</div><div class="abs" style="left:185.1px;top:163px;width:84px;height:22px;background:#fdfdfd;border-radius:2px"></div><div class="tt" style="left:185.1px;top:164.5px;width:84px;text-align:center;font-size:8.8px;color:#333">delaunay2.cpp</div></div><div class="tt" style="left:776.4px;top:299.9px;font-size:8.5px;color:#959595;word-spacing:0.2px">2 <svg style="display:inline-block;vertical-align:baseline;position:relative;top:0.80px;width:7.22px;height:7.22px;margin-right:0.68px" viewBox="-0.3 -0.3 10.6 10.6"><path d="M5 0.5L0.8 4.5 M5 0.5L9.2 4.5 M5 4V9.5" stroke="#a0a0a0" stroke-width="1.0" fill="none" stroke-linecap="square" opacity="1.0"/></svg><svg style="display:inline-block;vertical-align:baseline;position:relative;top:0.80px;width:7.22px;height:7.22px;margin-right:0.68px" viewBox="-0.3 -0.3 10.6 10.6"><path d="M5 0.5V2 M1 2.5H9 M2.8 3.2Q5 8 9 9.5 M7.2 3.2Q5 8 1 9.5" stroke="#a0a0a0" stroke-width="1.0" fill="none" stroke-linecap="square" opacity="1.0"/></svg><svg style="display:inline-block;vertical-align:baseline;position:relative;top:0.80px;width:7.22px;height:7.22px;margin-right:0.68px" viewBox="-0.3 -0.3 10.6 10.6"><path d="M2.5 0.5L1 4 M2 3V9.5 M5.5 1L4.5 3.5 M4.5 3H9 M4 6H9.5 M7 0.5V9.5" stroke="#a0a0a0" stroke-width="1.0" fill="none" stroke-linecap="square" opacity="1.0"/></svg><svg style="display:inline-block;vertical-align:baseline;position:relative;top:0.80px;width:7.22px;height:7.22px;margin-right:0.68px" viewBox="-0.3 -0.3 10.6 10.6"><path d="M1.5 2.5H8.5 M0.8 5H9.2 M5 0.5V5 M2.5 3.5L3.2 4.5 M7.5 3.5L6.8 4.5 M5 5Q4 8.5 1 9.5 M5 5Q6 8.5 9 9.5" stroke="#a0a0a0" stroke-width="1.0" fill="none" stroke-linecap="square" opacity="1.0"/></svg> | 97 <svg style="display:inline-block;vertical-align:baseline;position:relative;top:0.80px;width:7.22px;height:7.22px;margin-right:0.68px" viewBox="-0.3 -0.3 10.6 10.6"><path d="M5 0.5L0.8 4.5 M5 0.5L9.2 4.5 M5 4V9.5" stroke="#a0a0a0" stroke-width="1.0" fill="none" stroke-linecap="square" opacity="1.0"/></svg><svg style="display:inline-block;vertical-align:baseline;position:relative;top:0.80px;width:7.22px;height:7.22px;margin-right:0.68px" viewBox="-0.3 -0.3 10.6 10.6"><path d="M5 0.5V2 M1 2.5H9 M2.8 3.2Q5 8 9 9.5 M7.2 3.2Q5 8 1 9.5" stroke="#a0a0a0" stroke-width="1.0" fill="none" stroke-linecap="square" opacity="1.0"/></svg><svg style="display:inline-block;vertical-align:baseline;position:relative;top:0.80px;width:7.22px;height:7.22px;margin-right:0.68px" viewBox="-0.3 -0.3 10.6 10.6"><path d="M2.5 0.5L1 4 M2 3V9.5 M5.5 1L4.5 3.5 M4.5 3H9 M4 6H9.5 M7 0.5V9.5" stroke="#a0a0a0" stroke-width="1.0" fill="none" stroke-linecap="square" opacity="1.0"/></svg>: 622.4 KiB (637,309 <svg style="display:inline-block;vertical-align:baseline;position:relative;top:0.80px;width:7.22px;height:7.22px;margin-right:0.68px" viewBox="-0.3 -0.3 10.6 10.6"><path d="M5 0.3V1.3 M1 3.5V1.8H9V3.5 M3 3.5H7L5 5.5 M0.8 6H9.2 M5 5.5V9Q5 9.5 4 9.5" stroke="#a0a0a0" stroke-width="1.0" fill="none" stroke-linecap="square" opacity="1.0"/></svg><svg style="display:inline-block;vertical-align:baseline;position:relative;top:0.80px;width:7.22px;height:7.22px;margin-right:0.68px" viewBox="-0.3 -0.3 10.6 10.6"><path d="M0.8 2H9.2 M3 0.5V3.5 M7 0.5V3.5 M1.5 5H8.5V8 M4.5 5V9.5" stroke="#a0a0a0" stroke-width="1.0" fill="none" stroke-linecap="square" opacity="1.0"/></svg>) | <svg style="display:inline-block;vertical-align:baseline;position:relative;top:0.80px;width:7.22px;height:7.22px;margin-right:0.68px" viewBox="-0.3 -0.3 10.6 10.6"><path d="M0.8 1.5H9.2 M2 3.5H5.5V6.5H2Z M7.5 1.5V9Q7.5 9.5 6 9.5" stroke="#a0a0a0" stroke-width="1.0" fill="none" stroke-linecap="square" opacity="1.0"/></svg><svg style="display:inline-block;vertical-align:baseline;position:relative;top:0.80px;width:7.22px;height:7.22px;margin-right:0.68px" viewBox="-0.3 -0.3 10.6 10.6"><path d="M2 1H8.5V9.5 M2 1V6Q2 8.5 1 9.5 M2 3.8H8.5 M2 6.5H8.5 M5.2 1V9.5" stroke="#a0a0a0" stroke-width="1.0" fill="none" stroke-linecap="square" opacity="1.0"/></svg><svg style="display:inline-block;vertical-align:baseline;position:relative;top:0.80px;width:7.22px;height:7.22px;margin-right:0.68px" viewBox="-0.3 -0.3 10.6 10.6"><path d="M5 0.3V1.3 M1 3V1.8H9V3 M4 2.5L2 4.5 M6 2.5L8 4.5 M2.5 5.5H7.5 M5 5.5V9 M1 9H9" stroke="#a0a0a0" stroke-width="1.0" fill="none" stroke-linecap="square" opacity="1.0"/></svg><svg style="display:inline-block;vertical-align:baseline;position:relative;top:0.80px;width:7.22px;height:7.22px;margin-right:0.68px" viewBox="-0.3 -0.3 10.6 10.6"><path d="M1.5 0.5L2.5 1.5 M1.5 2.5V9.5 M3.5 1.2H8.5V9Q8.5 9.5 7.5 9.5 M3.5 4H6.5V8H3.5Z M3.5 6H6.5" stroke="#a0a0a0" stroke-width="1.0" fill="none" stroke-linecap="square" opacity="1.0"/></svg> : 7.9 GiB</div>
<div class="abs" style="left:0;top:491.3px;width:1080px;height:3px;background:#1e2a37"></div><div class="abs" style="left:397.5px;top:462.9px;width:190.8px;height:29px;background:#f4f4f4;border:1px solid #d6d6d6;border-bottom:none"></div><svg class="abs" style="left:399.9px;top:465.3px" width="26" height="25" viewBox="0 0 26 25"><rect x="0" y="0" width="25.6" height="24.5" rx="2.2" fill="#3e4b57"/><path d="M2.2 0 H23.4 Q25.6 0 25.6 2.2 V15.4 H0 V2.2 Q0 0 2.2 0 Z" fill="#13a1dc"/></svg><div class="abs" style="left:429.9px;top:468px;width:1.2px;height:19.4px;background:#777"></div><div class="abs" style="left:554.8px;top:465.3px;width:1.2px;height:22px;background:#777"></div><svg class="abs" style="left:435.8px;top:467.3px" width="25" height="21" viewBox="0 0 25 21"><rect x="0.3" y="0.3" width="24.2" height="19.8" fill="#d9dde0"/><rect x="2" y="1.2" width="20.3" height="16.8" fill="#24313c"/><path d="M4 2.8 L6.2 4.6 L4 6.4" stroke="#e6e6e6" stroke-width="1" fill="none"/><path d="M6.5 7.2 H9.2" stroke="#e6e6e6" stroke-width="1"/><rect x="0" y="19" width="24.5" height="1.3" fill="#9ba3aa"/></svg><svg class="abs" style="left:469.1px;top:466.8px" width="18" height="21" viewBox="0 0 18 21"><rect x="0" y="0" width="17.4" height="21" fill="#1898d6"/><path d="M7 4.5 H10.5 M7 14.5 H10.5" stroke="#8fd0f0" stroke-width="0.8"/><path d="M0 10.5 H17.4" stroke="#1586c0" stroke-width="0.6"/></svg><svg class="abs" style="left:494.5px;top:464.8px" width="27" height="27" viewBox="0 0 27 27"><circle cx="13.3" cy="13.1" r="12.6" fill="#1c97d4"/><path d="M6 6 Q9 3 12 5 Q11 9 8 10 Q5 11 4 9 Z M16 3 Q21 4 23 8 Q19 9 17 7 Z M15 14 Q20 13 23 16 Q21 21 17 22 Q15 18 15 14 Z M4 15 Q8 14 9 18 Q7 21 5 19 Z" fill="#4fc2ee"/><path d="M8.2 13.5 L8.2 24 L10.5 21.5 L12.8 25.5 L14.3 24.7 L12 20.8 L15.2 20.6 Z" fill="#ffffff"/></svg><svg class="abs" style="left:527.9px;top:466.8px" width="21" height="21" viewBox="0 0 21 21"><rect x="0" y="0" width="20.5" height="20.6" fill="#9fd2ea"/><rect x="3" y="2" width="14" height="6" fill="#c2e6f4"/><rect x="1" y="12" width="12" height="5" fill="#b8e0f2"/><circle cx="8.7" cy="8.3" r="5.6" fill="#5ccbec" stroke="#1f3f4c" stroke-width="1.5"/><path d="M12.6 12.3 L18 17.6" stroke="#1a1a1a" stroke-width="2.3"/></svg><svg class="abs" style="left:560.3px;top:465.7px" width="26" height="25" viewBox="0 0 26 25"><path d="M0 2 Q0 0 2 0 H9 L11.5 2.2 H23.5 Q25.3 2.2 25.3 4 V22 Q25.3 24.1 23.3 24.1 H2 Q0 24.1 0 22 Z" fill="#2b6fcf"/><path d="M0 6.2 H25.3 V22 Q25.3 24.1 23.3 24.1 H2 Q0 24.1 0 22 Z" fill="#9ccaf0"/></svg><div class="abs" style="left:935px;top:425px;width:140px;height:60px;background:radial-gradient(ellipse at 50% 50%, rgba(212,215,222,0.75), rgba(240,240,240,0.3) 55%, rgba(250,250,250,0) 72%)"></div><svg class="abs" style="left:940px;top:432px;filter:drop-shadow(1px 1.5px 1px rgba(0,0,0,0.22))" width="130" height="58" viewBox="0 0 130 58"><polygon points="33.90,24.70 33.63,27.47 29.41,28.72 28.44,30.54 29.74,34.74 27.59,36.51 23.72,34.41 21.75,35.01 19.70,38.90 16.93,38.63 15.68,34.41 13.86,33.44 9.66,34.74 7.89,32.59 9.99,28.72 9.39,26.75 5.50,24.70 5.77,21.93 9.99,20.68 10.96,18.86 9.66,14.66 11.81,12.89 15.68,14.99 17.65,14.39 19.70,10.50 22.47,10.77 23.72,14.99 25.54,15.96 29.74,14.66 31.51,16.81 29.41,20.68 30.01,22.65" fill="#f4923a"/><circle cx="19.70" cy="24.70" r="3.30" fill="#f2f2f2"/><polygon points="64.50,34.40 64.18,37.62 59.28,39.07 58.15,41.18 59.67,46.07 57.17,48.12 52.67,45.68 50.38,46.38 48.00,50.90 44.78,50.58 43.33,45.68 41.22,44.55 36.33,46.07 34.28,43.57 36.72,39.07 36.02,36.78 31.50,34.40 31.82,31.18 36.72,29.73 37.85,27.62 36.33,22.73 38.83,20.68 43.33,23.12 45.62,22.42 48.00,17.90 51.22,18.22 52.67,23.12 54.78,24.25 59.67,22.73 61.72,25.23 59.28,29.73 59.98,32.02" fill="#c8e84a"/><circle cx="48.00" cy="34.40" r="3.80" fill="#f2f2f2"/><path d="M32 18 L42 10 M39 9.5 L43.5 9 L43 13.5" stroke="#c4c4c4" stroke-width="2.6" fill="none"/></svg><div class="tt" style="left:998.6px;top:440.5px;font-size:13px;filter:drop-shadow(1px 1px 0.6px rgba(0,0,0,0.2))"><svg style="display:inline-block;vertical-align:baseline;position:relative;top:0.00px;width:12.35px;height:12.35px;margin-right:1.05px" viewBox="-0.3 -0.3 10.6 10.6"><path d="M1.5 3H8.5V6.5H1.5Z M5 0.5V9.5" stroke="#f49a4a" stroke-width="2.0" fill="none" stroke-linecap="square" opacity="1.0"/></svg><svg style="display:inline-block;vertical-align:baseline;position:relative;top:0.00px;width:12.35px;height:12.35px;margin-right:1.05px" viewBox="-0.3 -0.3 10.6 10.6"><path d="M2.5 0.5L1 3.5 M2 2.5V5.5 M6 1V4.5Q6 5.5 8 5.5H9 M9 1.5L6 3 M1 7H9 M5 5.5V9.5" stroke="#f49a4a" stroke-width="2.0" fill="none" stroke-linecap="square" opacity="1.0"/></svg><svg style="display:inline-block;vertical-align:baseline;position:relative;top:0.00px;width:12.35px;height:12.35px;margin-right:1.05px" viewBox="-0.3 -0.3 10.6 10.6"><path d="M1.5 1.5H8.5 M5 1.5V8.5 M0.8 8.7H9.2" stroke="#f49a4a" stroke-width="2.0" fill="none" stroke-linecap="square" opacity="1.0"/></svg><svg style="display:inline-block;vertical-align:baseline;position:relative;top:0.00px;width:12.35px;height:12.35px;margin-right:1.05px" viewBox="-0.3 -0.3 10.6 10.6"><path d="M0.5 3H3.5 M2 0.5V9L1 8.5 M0.5 6.5L3.5 5 M6.5 0.5V1.5 M4.5 2.2V3H9.5V2.2 M5.5 4L4.5 5.5 M8 4L9.5 5.5 M5 6.5H9 M7 6.5V9.5 M4.5 9.5H9.5" stroke="#f49a4a" stroke-width="2.0" fill="none" stroke-linecap="square" opacity="1.0"/></svg><svg style="display:inline-block;vertical-align:baseline;position:relative;top:0.00px;width:12.35px;height:12.35px;margin-right:1.05px" viewBox="-0.3 -0.3 10.6 10.6"><path d="M1 9.5V1H9V9.5 M3 3L5 6.5 M5 3L3 6.5 M5.5 3L7.5 6.5 M7.5 3L5.5 6.5" stroke="#f49a4a" stroke-width="2.0" fill="none" stroke-linecap="square" opacity="1.0"/></svg></div><div class="tt" style="left:1007.6px;top:456.6px;font-size:10.8px;font-weight:bold;color:#6c6c6c;letter-spacing:-0.4px;text-shadow:1px 1px 1px rgba(0,0,0,0.2)">gkong.com</div>

</body></html>
